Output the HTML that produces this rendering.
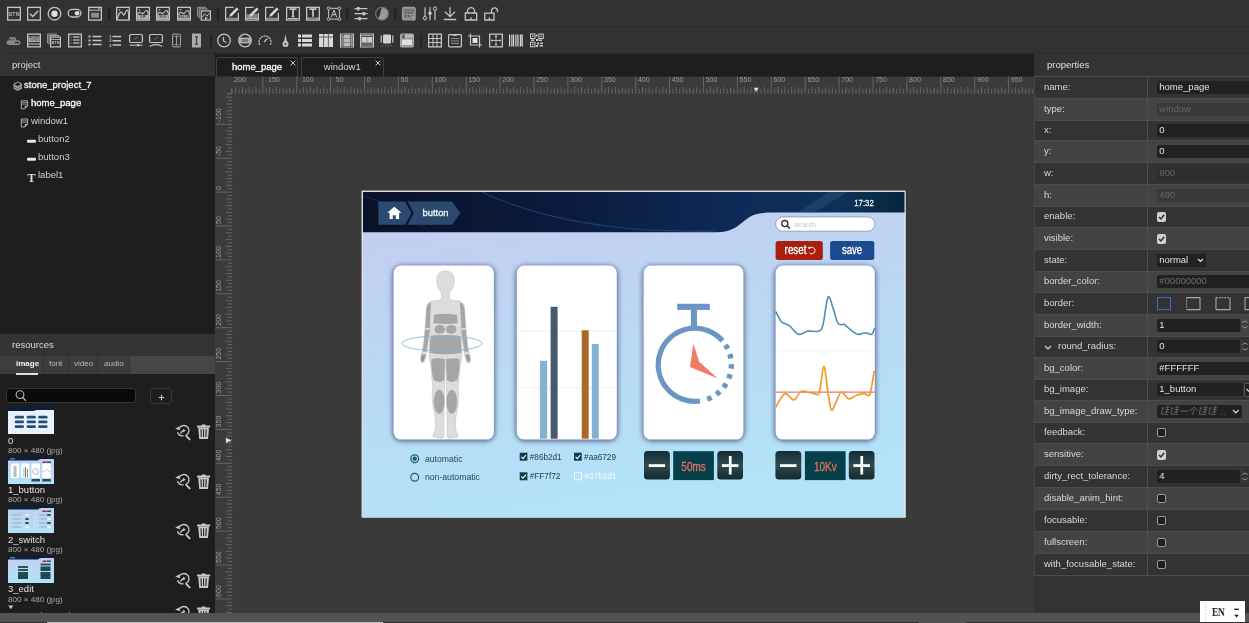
<!DOCTYPE html>
<html><head><meta charset="utf-8">
<style>
*{box-sizing:border-box;margin:0;padding:0}
html,body{width:1249px;height:623px;overflow:hidden;background:#333;font-family:"Liberation Sans",sans-serif;color:#ddd;position:relative}
.a{position:absolute;white-space:nowrap;will-change:transform}
svg{position:absolute;overflow:visible;will-change:transform}
</style></head><body>
<div class="a" style="left:0;top:0;width:1249px;height:54px;background:#323232"></div><div class="a" style="left:6px;top:26px;width:1243px;height:1px;background:#2a2a2a"></div><div class="a" style="left:6px;top:53px;width:1243px;height:1px;background:#2a2a2a"></div><svg style="left:0;top:0" width="1249" height="54" viewBox="0 0 1249 54"><g transform="translate(7,6.7)"><rect x="0.65" y="0.65" width="12.7" height="12.7" fill="none" stroke="#c4c4c4" stroke-width="1.3"/><text x="7" y="9.2" font-size="5.4" font-weight="bold" text-anchor="middle" fill="#b0b0b0" font-family="Liberation Sans">BTN</text></g><g transform="translate(27,6.7)"><rect x="0.65" y="0.65" width="12.7" height="12.7" fill="none" stroke="#c4c4c4" stroke-width="1.3"/><path d="M3 7 L5.8 9.8 L11 4.3" fill="none" stroke="#c4c4c4" stroke-width="1.5"/></g><g transform="translate(47.5,6.7)"><circle cx="7" cy="7" r="6.3" fill="none" stroke="#c4c4c4" stroke-width="1.3"/><circle cx="7" cy="7" r="3.2" fill="#e0e0e0"/></g><g transform="translate(67.5,6.7)"><rect x="0.65" y="2.7" width="12.7" height="7.6" rx="3.8" fill="none" stroke="#c4c4c4" stroke-width="1.3"/><circle cx="9.6" cy="6.5" r="2.3" fill="#e0e0e0"/></g><g transform="translate(88,6.7)"><rect x="0.65" y="0.65" width="12.7" height="12.7" fill="none" stroke="#c4c4c4" stroke-width="1.3"/><path d="M1 3.5 H13" stroke="#c4c4c4" stroke-width="1"/><rect x="10" y="1.5" width="1.6" height="1.2" fill="#c4c4c4"/><rect x="3" y="6" width="8" height="5" fill="#8a8a8a"/></g><rect x="108.5" y="7" width="1.6" height="13" fill="#1f1f1f"/><g transform="translate(116,6.7)"><rect x="0.65" y="0.65" width="12.7" height="12.7" fill="none" stroke="#c4c4c4" stroke-width="1.3"/><path d="M1.3 12.5 C2.5 8 4 4.5 5.5 5.5 C6.5 6.2 7 9 8.2 8 C9.3 6.8 10 3 11.3 3.3 C12.5 3.6 12.7 8 12.7 12.5" fill="none" stroke="#c4c4c4" stroke-width="1.2"/><circle cx="3.5" cy="3.3" r="0.8" fill="#c4c4c4"/></g><g transform="translate(136,6.7)"><rect x="0.65" y="0.65" width="12.7" height="12.7" fill="none" stroke="#c4c4c4" stroke-width="1.3"/><rect x="1.3" y="8.2" width="11.4" height="4.5" fill="#b4b4b4"/><path d="M1.5 8 C2.5 6 3.5 5 5 6 C6 6.8 6.5 7.5 7.5 6.5 C8.5 5 9.5 3.5 10.5 3.8 C11.5 4.2 12.3 6 12.5 8" fill="none" stroke="#c4c4c4" stroke-width="1.1"/><circle cx="3.5" cy="3" r="0.8" fill="#c4c4c4"/><text x="7" y="11.8" font-size="3.6" font-weight="bold" text-anchor="middle" fill="#444" font-family="Liberation Sans">GIF</text></g><g transform="translate(156,6.7)"><rect x="0.65" y="0.65" width="12.7" height="12.7" fill="none" stroke="#c4c4c4" stroke-width="1.3"/><rect x="1.3" y="8.2" width="11.4" height="4.5" fill="#b4b4b4"/><path d="M1.5 8 C2.5 6 3.5 5 5 6 C6 6.8 6.5 7.5 7.5 6.5 C8.5 5 9.5 3.5 10.5 3.8 C11.5 4.2 12.3 6 12.5 8" fill="none" stroke="#c4c4c4" stroke-width="1.1"/><circle cx="3.5" cy="3" r="0.8" fill="#c4c4c4"/><text x="7" y="11.8" font-size="3.6" font-weight="bold" text-anchor="middle" fill="#444" font-family="Liberation Sans">SVG</text></g><g transform="translate(177,6.7)"><rect x="0.65" y="0.65" width="12.7" height="12.7" fill="none" stroke="#c4c4c4" stroke-width="1.3"/><rect x="1.3" y="8.2" width="11.4" height="4.5" fill="#b4b4b4"/><path d="M1.5 8 C2.5 6 3.5 5 5 6 C6 6.8 6.5 7.5 7.5 6.5 C8.5 5 9.5 3.5 10.5 3.8 C11.5 4.2 12.3 6 12.5 8" fill="none" stroke="#c4c4c4" stroke-width="1.1"/><circle cx="3.5" cy="3" r="0.8" fill="#c4c4c4"/><text x="7" y="11.8" font-size="3.6" font-weight="bold" text-anchor="middle" fill="#444" font-family="Liberation Sans">VALUE</text></g><g transform="translate(197,6.7)"><path d="M0.6 10 V0.6 H9" fill="none" stroke="#9a9a9a" stroke-width="1"/><path d="M2.2 11.5 V2.2 H10.5" fill="none" stroke="#a8a8a8" stroke-width="1"/><rect x="4.2" y="4.2" width="9.2" height="9.2" fill="none" stroke="#c4c4c4" stroke-width="1.2"/><path d="M5 11 L7.5 7 L10 9.5 L12.5 6" fill="none" stroke="#c4c4c4" stroke-width="0.9"/><path d="M8 10 L11 11.5 L8 13Z" fill="#c4c4c4"/></g><rect x="217" y="7" width="1.6" height="13" fill="#1f1f1f"/><g transform="translate(225,6.7)"><path d="M8.5 0.65 H0.65 V13.35 H13.35 V6" fill="none" stroke="#c4c4c4" stroke-width="1.3"/><path d="M4.2 10.2 L6.89 9.35 L13.6 2.64 L11.76 0.8 L5.05 7.51Z" fill="#d6d6d6"/><path d="M1.5 11.6 H12.5" stroke="#c4c4c4" stroke-width="0.9"/></g><g transform="translate(245,6.7)"><path d="M8.5 0.65 H0.65 V13.35 H13.35 V6" fill="none" stroke="#c4c4c4" stroke-width="1.3"/><rect x="1.5" y="7.3" width="11" height="5.2" fill="#8a8a8a"/><path d="M1.5 8.6 H12.5 M1.5 10 H12.5 M1.5 11.4 H12.5" stroke="#777" stroke-width="0.5"/><path d="M4.2 10.2 L6.89 9.35 L13.6 2.64 L11.76 0.8 L5.05 7.51Z" fill="#d6d6d6"/><path d="M1.5 11.6 H12.5" stroke="#c4c4c4" stroke-width="0.9"/></g><g transform="translate(265,6.7)"><path d="M8.5 0.65 H0.65 V13.35 H13.35 V6" fill="none" stroke="#c4c4c4" stroke-width="1.3"/><path d="M4.2 10.2 L6.89 9.35 L13.6 2.64 L11.76 0.8 L5.05 7.51Z" fill="#d6d6d6"/><path d="M1.5 11.6 H12.5" stroke="#c4c4c4" stroke-width="0.9"/></g><g transform="translate(286,6.7)"><rect x="0.65" y="0.65" width="12.7" height="12.7" fill="none" stroke="#c4c4c4" stroke-width="1.3"/><path d="M3.5 2.5 H10.5 M7 2.5 V10" stroke="#c4c4c4" stroke-width="1.8"/><path d="M5.5 10 H8.5" stroke="#c4c4c4" stroke-width="1.2"/><path d="M2 11.8 H12" stroke="#c4c4c4" stroke-width="1"/></g><g transform="translate(306,6.7)"><rect x="0.65" y="0.65" width="12.7" height="12.7" fill="none" stroke="#c4c4c4" stroke-width="1.3"/><path d="M3.5 2.5 H10.5 M7 2.5 V10" stroke="#c4c4c4" stroke-width="1.8"/><path d="M2 11.5 H12 M2 10.5 V12.5 M12 10.5 V12.5" stroke="#c4c4c4" stroke-width="0.9"/></g><g transform="translate(327,6.7)"><rect x="1.6" y="1.6" width="10.8" height="10.8" fill="none" stroke="#c4c4c4" stroke-width="1"/><circle cx="1.6" cy="1.6" r="1.4" fill="#333" stroke="#c4c4c4" stroke-width="0.9"/><circle cx="12.4" cy="1.6" r="1.4" fill="#333" stroke="#c4c4c4" stroke-width="0.9"/><circle cx="1.6" cy="12.4" r="1.4" fill="#333" stroke="#c4c4c4" stroke-width="0.9"/><circle cx="12.4" cy="12.4" r="1.4" fill="#333" stroke="#c4c4c4" stroke-width="0.9"/><path d="M4.3 10.5 L7 3.3 L9.7 10.5 M5.3 8 H8.7" fill="none" stroke="#c4c4c4" stroke-width="1"/></g><rect x="346.5" y="7" width="1.6" height="13" fill="#1f1f1f"/><g transform="translate(354,6.7)"><path d="M0.5 2 H13.5 M0.5 7 H13.5 M0.5 12 H13.5" stroke="#c4c4c4" stroke-width="1.3"/><rect x="3" y="0.3" width="2.6" height="3.4" fill="#c4c4c4"/><rect x="8.5" y="5.3" width="2.6" height="3.4" fill="#c4c4c4"/><rect x="4.2" y="10.3" width="2.6" height="3.4" fill="#c4c4c4"/></g><g transform="translate(375,6.7)"><circle cx="7" cy="7" r="6.4" fill="none" stroke="#777" stroke-width="1.1"/><path d="M7 1 A6 6 0 1 1 3 11.5 C6 9 5 4 7 1Z" fill="#9a9a9a"/></g><rect x="394.5" y="7" width="1.6" height="13" fill="#1f1f1f"/><g transform="translate(402,6.7)"><rect x="0.6" y="0.6" width="12.6" height="12.6" rx="1" fill="#8a8a8a" stroke="#a8a8a8" stroke-width="1"/><path d="M1 3.5 H13" stroke="#555" stroke-width="0.8"/><g fill="#555"><circle cx="3.5" cy="6" r="1"/><circle cx="6.5" cy="6" r="1"/><circle cx="9.5" cy="6" r="1"/><circle cx="3.5" cy="9.3" r="1"/><circle cx="6.5" cy="9.3" r="1"/></g><circle cx="11.3" cy="11.3" r="2.6" fill="#9a9a9a" stroke="#666" stroke-width="0.5"/></g><g transform="translate(423,6.7)"><path d="M2 0.5 V13.5 M7 0.5 V13.5 M12 0.5 V13.5" stroke="#c4c4c4" stroke-width="1.2"/><circle cx="2" cy="11.5" r="1.7" fill="#333" stroke="#c4c4c4" stroke-width="1"/><circle cx="7" cy="6.5" r="1.8" fill="#c4c4c4"/><circle cx="12" cy="1.9" r="1.7" fill="#333" stroke="#c4c4c4" stroke-width="1"/></g><g transform="translate(443,6.7)"><path d="M7 0.5 V10 M2 5 L7 10 L12 5 M0.8 12.8 H13.2" fill="none" stroke="#c4c4c4" stroke-width="1.3"/></g><g transform="translate(464,6.7)"><path d="M3.5 6.5 V4.5 A3.5 3.5 0 0 1 10.5 4.5 V6.5" fill="none" stroke="#c4c4c4" stroke-width="1.3"/><path d="M1.3 6.3 H12.7 V13.3 H1.3Z M7 10.5 V13" fill="none" stroke="#c4c4c4" stroke-width="1.3"/></g><g transform="translate(484,6.7)"><path d="M7.5 6.5 V4.2 A3 3 0 0 1 13.5 4.2 V5.5" fill="none" stroke="#c4c4c4" stroke-width="1.3"/><path d="M0.8 6.5 H10 V13.3 H0.8Z M5.4 10.5 V13" fill="none" stroke="#c4c4c4" stroke-width="1.3"/></g><g transform="translate(6.5,33.5)"><rect x="0.6" y="7.5" width="12.8" height="3.2" rx="1.6" fill="none" stroke="#c4c4c4" stroke-width="1"/><rect x="1.5" y="8.3" width="7" height="1.6" fill="#9a9a9a"/><text x="6" y="6.5" font-size="3.5" font-weight="bold" text-anchor="middle" fill="#c4c4c4" font-family="Liberation Sans">70%</text></g><g transform="translate(27,33.5)"><rect x="0.65" y="0.65" width="12.7" height="12.7" fill="none" stroke="#c4c4c4" stroke-width="1.3"/><rect x="1.5" y="3" width="11" height="5.5" fill="#aaa"/><text x="7" y="7.8" font-size="4.6" font-weight="bold" text-anchor="middle" fill="#555" font-family="Liberation Sans">TAB</text><path d="M1 10.5 H13" stroke="#c4c4c4" stroke-width="1"/></g><g transform="translate(47,33.5)"><path d="M0.6 9.5 V0.6 H10" fill="none" stroke="#aaa" stroke-width="0.9"/><path d="M2 11 V2 H11.5 V3" fill="none" stroke="#b0b0b0" stroke-width="0.9"/><rect x="3.6" y="3.6" width="9.8" height="9.8" fill="none" stroke="#c4c4c4" stroke-width="1.2"/><path d="M4 6 H13" stroke="#c4c4c4" stroke-width="0.8"/><text x="8.5" y="10.8" font-size="3.8" font-weight="bold" text-anchor="middle" fill="#c4c4c4" font-family="Liberation Sans">BTN</text></g><g transform="translate(68,33.5)"><rect x="0.65" y="0.65" width="12.7" height="12.7" fill="none" stroke="#c4c4c4" stroke-width="1.3"/><path d="M5 3.5 H11.5 M5 6.5 H11.5 M5 9.5 H11.5" stroke="#aaa" stroke-width="1.3"/><path d="M2.5 3.5 H3.5 M2.5 6.5 H3.5 M2.5 9.5 H3.5" stroke="#aaa" stroke-width="1"/></g><g transform="translate(88,33.5)"><path d="M0.5 3 H2.5 M0.5 7 H2.5 M0.5 11 H2.5" stroke="#c4c4c4" stroke-width="1.8"/><path d="M4.5 3 H13.5 M4.5 7 H13.5 M4.5 11 H13.5" stroke="#c4c4c4" stroke-width="1.6"/></g><g transform="translate(109,33.5)"><text x="1.3" y="4.5" font-size="4" font-weight="bold" text-anchor="middle" fill="#c4c4c4" font-family="Liberation Sans">1</text><text x="1.3" y="8.8" font-size="4" font-weight="bold" text-anchor="middle" fill="#c4c4c4" font-family="Liberation Sans">2</text><text x="1.3" y="13" font-size="4" font-weight="bold" text-anchor="middle" fill="#c4c4c4" font-family="Liberation Sans">3</text><path d="M3.5 3 H12 M3.5 7.2 H12 M3.5 11.5 H12" stroke="#c4c4c4" stroke-width="1.6"/></g><g transform="translate(129,33.5)"><rect x="0.6" y="1" width="12.8" height="8" rx="1.2" fill="none" stroke="#c4c4c4" stroke-width="1.2"/><path d="M5.5 6 L8.5 3.5" stroke="#888" stroke-width="0.9"/><path d="M0.5 11.7 H13.5" stroke="#aaa" stroke-width="1.3"/><rect x="8" y="10.6" width="2.2" height="2.2" fill="#c4c4c4"/></g><g transform="translate(149,33.5)"><rect x="0.6" y="1" width="12.8" height="8" rx="1.2" fill="none" stroke="#c4c4c4" stroke-width="1.2"/><path d="M5.5 6 L8.5 3.5" stroke="#888" stroke-width="0.9"/><path d="M0.5 13 Q7 9 13.5 13" fill="none" stroke="#aaa" stroke-width="1.3"/></g><g transform="translate(172,33.5)"><rect x="0.6" y="0.6" width="7.8" height="12.8" rx="0.8" fill="none" stroke="#aaa" stroke-width="1"/><path d="M4.5 2.5 V11.5 M3 3.5 L4.5 2 L6 3.5 M3 10.5 L4.5 12 L6 10.5" fill="none" stroke="#aaa" stroke-width="0.9"/><path d="M1.5 3 H7.5 M1.5 11 H7.5" stroke="#888" stroke-width="0.6"/></g><g transform="translate(192,33.5)"><rect x="0" y="0" width="9" height="14" fill="#aaa"/><path d="M4.5 2.5 V11.5 M3 3.3 H6 M3 10.7 H6" stroke="#444" stroke-width="1.3"/></g><rect x="210" y="34" width="1.6" height="13" fill="#1f1f1f"/><g transform="translate(217,33.5)"><circle cx="7" cy="7" r="6.3" fill="none" stroke="#c4c4c4" stroke-width="1.2"/><path d="M6.5 3.5 V7.5 L9.5 9" fill="none" stroke="#c4c4c4" stroke-width="1.2"/></g><g transform="translate(238,33.5)"><circle cx="7" cy="7" r="6.3" fill="none" stroke="#c4c4c4" stroke-width="1.2"/><rect x="1" y="4.5" width="12" height="5" fill="#aaa"/><rect x="4" y="5.5" width="6" height="3" fill="#777"/><path d="M1 4.5 H13 M1 9.5 H13" stroke="#c4c4c4" stroke-width="0.7"/></g><g transform="translate(258,33.5)"><path d="M1.8 11.5 A6 6 0 1 1 12.2 11.5" fill="none" stroke="#c4c4c4" stroke-width="1.2" stroke-dasharray="2.2 0.6"/><path d="M6 8.5 L9.5 5" stroke="#c4c4c4" stroke-width="1.2"/></g><g transform="translate(282,33.5)"><path d="M3.5 0.5 L5 9 H2Z" fill="#c4c4c4"/><circle cx="3.5" cy="10.5" r="3" fill="#c4c4c4"/><circle cx="3.5" cy="10.5" r="1" fill="#333"/></g><g transform="translate(298,33.5)"><rect x="0" y="1" width="3" height="3" fill="#d8d8d8"/><rect x="0" y="5.5" width="3" height="3" fill="#d8d8d8"/><rect x="0" y="10" width="3" height="3" fill="#d8d8d8"/><rect x="4" y="1" width="10" height="3" fill="#d8d8d8"/><rect x="4" y="5.5" width="10" height="3" fill="#d8d8d8"/><rect x="4" y="10" width="10" height="3" fill="#d8d8d8"/></g><g transform="translate(319,33.5)"><rect x="0" y="0.5" width="14" height="13" fill="#d8d8d8"/><path d="M4.6 0 V14 M9.4 0 V14" stroke="#555" stroke-width="0.9"/><path d="M0 3.5 H14" stroke="#555" stroke-width="0.9"/></g><g transform="translate(340,33.5)"><rect x="0.5" y="0.5" width="13" height="13" fill="none" stroke="#c4c4c4" stroke-width="1"/><rect x="1.5" y="1.5" width="11" height="11" fill="#bbb"/><path d="M3 0.5 V13.5 M10.8 0.5 V13.5" stroke="#333" stroke-width="0.8"/><path d="M3 5 H10.8 M3 9 H10.8" stroke="#666" stroke-width="0.6"/></g><g transform="translate(360,33.5)"><rect x="0.5" y="0.5" width="13" height="13" fill="none" stroke="#c4c4c4" stroke-width="1"/><rect x="1.5" y="1.5" width="11" height="11" fill="#ccc"/><path d="M1.5 2.8 H12.5" stroke="#444" stroke-width="1.3"/><path d="M7 3.5 V8.5" stroke="#888" stroke-width="0.8"/><rect x="1.5" y="9" width="11" height="3.5" fill="#666"/></g><g transform="translate(380,33.5)"><rect x="3" y="1" width="8" height="9" rx="1" fill="#d0d0d0"/><rect x="0.5" y="2" width="1.5" height="7" fill="#aaa"/><rect x="12" y="2" width="1.5" height="7" fill="#aaa"/><g fill="#888"><rect x="2.2" y="11.8" width="1" height="1"/><rect x="5.2" y="11.8" width="1" height="1"/><rect x="8.2" y="11.8" width="1" height="1"/><rect x="11.2" y="11.8" width="1" height="1"/></g></g><g transform="translate(400,33.5)"><rect x="0.5" y="0.5" width="13" height="13" rx="1" fill="#9a9a9a" stroke="#aaa" stroke-width="1"/><rect x="2" y="6" width="10" height="5.5" fill="#e0e0e0"/><rect x="2.5" y="1" width="2" height="4" fill="#555"/><rect x="5" y="1" width="7.5" height="3" fill="#bbb"/></g><rect x="420.5" y="34" width="1.6" height="13" fill="#1f1f1f"/><g transform="translate(428,33.5)"><rect x="0.65" y="0.65" width="12.7" height="12.7" fill="none" stroke="#c4c4c4" stroke-width="1.3"/><g fill="#c4c4c4"><circle cx="4" cy="4" r="0.01"/></g><path d="M1 5 H13 M1 9 H13 M5 1 V13 M9 1 V13" stroke="#c4c4c4" stroke-width="1.1"/></g><g transform="translate(448,33.5)"><rect x="0.6" y="1.2" width="12.8" height="12.2" rx="0.8" fill="none" stroke="#c4c4c4" stroke-width="1.2"/><path d="M4.5 1.2 Q7 2.5 9.5 1.2" stroke="#c4c4c4" stroke-width="1.2" fill="none"/><path d="M3 5 H11 M3 7.5 H11 M3 10 H11" stroke="#999" stroke-width="0.9"/></g><g transform="translate(468,33.5)"><path d="M2.5 0 V11.5 H14 M0 2.5 H11.5 V14" fill="none" stroke="#c4c4c4" stroke-width="1.2"/><rect x="4.5" y="4.5" width="5" height="5" fill="#e0e0e0"/></g><g transform="translate(489,33.5)"><rect x="0.65" y="0.65" width="12.7" height="12.7" fill="none" stroke="#c4c4c4" stroke-width="1.3"/><path d="M7 2 V12 M2 7 H12" stroke="#c4c4c4" stroke-width="0.9"/><path d="M7 1.8 L5.5 3.6 H8.5Z M7 12.2 L5.5 10.4 H8.5Z M1.8 7 L3.6 5.5 V8.5Z M12.2 7 L10.4 5.5 V8.5Z" fill="#c4c4c4"/></g><g transform="translate(509,33.5)"><g fill="#d8d8d8"><rect x="0" y="1" width="1.2" height="12"/><rect x="2" y="1" width="0.7" height="12"/><rect x="3.5" y="1" width="1.6" height="12"/><rect x="6" y="1" width="0.7" height="12"/><rect x="7.5" y="1" width="1.2" height="12"/><rect x="9.5" y="1" width="0.7" height="12"/><rect x="11" y="1" width="1.6" height="12"/><rect x="13.2" y="1" width="0.8" height="12"/></g></g><g transform="translate(530,33.5)"><g fill="none" stroke="#c8c8c8" stroke-width="1"><rect x="0.5" y="0.5" width="4.5" height="4.5"/><rect x="8.8" y="0.5" width="4.5" height="4.5"/><rect x="0.5" y="8.8" width="4.5" height="4.5"/></g><g fill="#c8c8c8"><rect x="2" y="2" width="1.5" height="1.5"/><rect x="10.3" y="2" width="1.5" height="1.5"/><rect x="2" y="10.3" width="1.5" height="1.5"/><rect x="6" y="1" width="1.5" height="2"/><rect x="6" y="5.5" width="2.5" height="2"/><rect x="9" y="6" width="3" height="1.5"/><rect x="7" y="9" width="2" height="2"/><rect x="10" y="9" width="3" height="1.5"/><rect x="9.5" y="11.5" width="3.5" height="1.5"/><rect x="1" y="6" width="3" height="1.5"/><rect x="6" y="11.5" width="2" height="2"/></g></g></svg><div class="a" style="left:0;top:54px;width:215px;height:559px;background:#1e1e1e"></div><div class="a" style="left:0;top:54px;width:215px;height:22px;background:#333"></div><div class="a" style="left:12px;top:58.5px;font-size:9.5px;color:#ddd">project</div><div class="a" style="left:24.3px;top:78.8px;font-size:9.5px;line-height:11px;color:#f0f0f0;-webkit-text-stroke:0.3px #f0f0f0;">stone_project_7</div><div class="a" style="left:31px;top:96.8px;font-size:9.5px;line-height:11px;color:#f8f8f8;-webkit-text-stroke:0.3px #f8f8f8;">home_page</div><div class="a" style="left:31px;top:115px;font-size:9.5px;line-height:11px;color:#d0d0d0;">window1</div><div class="a" style="left:38px;top:133px;font-size:9.5px;line-height:11px;color:#d0d0d0;">button2</div><div class="a" style="left:38px;top:151px;font-size:9.5px;line-height:11px;color:#d0d0d0;">button3</div><div class="a" style="left:38px;top:169px;font-size:9.5px;line-height:11px;color:#d0d0d0;">label1</div><svg style="left:0;top:0" width="215" height="200"><g transform="translate(13.5,82)"><path d="M4.2 0 L8.5 2.3 L4.2 4.6 L0 2.3Z" fill="none" stroke="#bbb" stroke-width="0.9"/><path d="M0 2.3 V6.8 L4.2 9.1 L8.5 6.8 V2.3 L4.2 4.6Z" fill="#9a9a9a"/><path d="M0 4.5 L4.2 6.8 L8.5 4.5" fill="none" stroke="#555" stroke-width="0.7"/></g><g transform="translate(20.8,100.3)"><path d="M0.5 8.5 V0.5 H6.8 V5.5 L4 8.5Z" fill="none" stroke="#bbb" stroke-width="0.9"/><path d="M1 2.3 H6.5 M1 3.8 H6.5" stroke="#bbb" stroke-width="0.7"/><path d="M4 8.5 V5.5 H6.8" fill="#bbb"/></g><g transform="translate(20.8,118.5)"><path d="M0.5 8.5 V0.5 H6.8 V5.5 L4 8.5Z" fill="none" stroke="#bbb" stroke-width="0.9"/><path d="M1 2.3 H6.5 M1 3.8 H6.5" stroke="#bbb" stroke-width="0.7"/><path d="M4 8.5 V5.5 H6.8" fill="#bbb"/></g><rect x="27" y="139.7" width="9" height="3" rx="1" fill="#e8e8e8"/><rect x="27" y="157.7" width="9" height="3" rx="1" fill="#e8e8e8"/><text x="31.5" y="182" font-family="Liberation Serif" font-size="12" font-weight="bold" text-anchor="middle" fill="#ddd">T</text></svg><div class="a" style="left:0;top:334px;width:215px;height:22px;background:#333"></div><div class="a" style="left:12px;top:338.5px;font-size:9.5px;color:#ddd">resources</div><div class="a" style="left:0;top:355.6px;width:215px;height:18.2px;background:#464646"></div><div class="a" style="left:0;top:355.6px;width:128.6px;height:18.2px;background:#3d3d3d"></div><div class="a" style="left:43px;top:355.6px;width:1.4px;height:18.2px;background:#313131"></div><div class="a" style="left:67.5px;top:355.6px;width:1.4px;height:18.2px;background:#313131"></div><div class="a" style="left:97.4px;top:355.6px;width:1.4px;height:18.2px;background:#313131"></div><div class="a" style="left:128.6px;top:355.6px;width:1.4px;height:18.2px;background:#313131"></div><div class="a" style="left:16.2px;top:358.7px;font-size:8px;font-weight:bold;color:#f4f4f4">image</div><div class="a" style="left:16px;top:372.5px;width:22.4px;height:1.5px;background:#e0e0e0"></div><div class="a" style="left:49px;top:358.7px;font-size:8px;color:#bbb">font</div><div class="a" style="left:74px;top:358.7px;font-size:8px;color:#bbb">video</div><div class="a" style="left:104px;top:358.7px;font-size:8px;color:#bbb">audio</div><div class="a" style="left:6.3px;top:388.3px;width:130.2px;height:15.2px;background:#0a0a0a;border:1px solid #353535;border-radius:3px"></div><svg style="left:14px;top:389px" width="14" height="14"><circle cx="6" cy="5.6" r="3.9" fill="none" stroke="#bbb" stroke-width="1.1"/><path d="M8.8 8.4 L11.8 11.9" stroke="#bbb" stroke-width="1.3"/></svg><div class="a" style="left:150.3px;top:388.3px;width:22.3px;height:15.5px;background:#1e1e1e;border:1px solid #383838;border-radius:3px"></div><svg style="left:158px;top:393.5px" width="7" height="7"><path d="M3.5 0.8 V6.2 M0.8 3.5 H6.2" stroke="#ccc" stroke-width="1.1"/></svg><svg style="left:7.8px;top:407px" width="46" height="27" viewBox="0 0 46 27"><rect x="0" y="0" width="46" height="27" fill="#e8f2fc"/><path d="M0 0 H46 V3 H29 Q27 3 26 4 H0Z" fill="#0b1d3e"/><rect x="6.7" y="8.8" width="9.3" height="2.8" rx="1.2" fill="#254d7e"/><rect x="6.7" y="13.5" width="9.3" height="2.8" rx="1.2" fill="#254d7e"/><rect x="6.7" y="18.2" width="9.3" height="2.8" rx="1.2" fill="#254d7e"/><rect x="18.6" y="8.8" width="9.3" height="2.8" rx="1.2" fill="#254d7e"/><rect x="18.6" y="13.5" width="9.3" height="2.8" rx="1.2" fill="#254d7e"/><rect x="18.6" y="18.2" width="9.3" height="2.8" rx="1.2" fill="#254d7e"/><rect x="30.2" y="8.8" width="9.3" height="2.8" rx="1.2" fill="#254d7e"/><rect x="30.2" y="13.5" width="9.3" height="2.8" rx="1.2" fill="#254d7e"/><rect x="30.2" y="18.2" width="9.3" height="2.8" rx="1.2" fill="#254d7e"/></svg><div class="a" style="left:8px;top:434.5px;font-size:9.5px;line-height:11px;color:#e0e0e0">0</div><div class="a" style="left:8px;top:446px;font-size:8.1px;line-height:10px;color:#aaa">800 × 480 (jpg)</div><svg style="left:174.4px;top:423.5px" width="17" height="17"><path d="M5.6 3.6 A5.2 5.2 0 1 1 11.9 11.4" fill="none" stroke="#c8c8c8" stroke-width="1.4"/><path d="M1.2 4.8 L5.3 2.2 L6.3 6.2Z" fill="#c8c8c8"/><path d="M3.6 8.2 A5.2 5.2 0 0 0 9.5 11.7" fill="none" stroke="#c8c8c8" stroke-width="1.4"/><path d="M6.6 9.6 Q7.5 6.8 10.2 6.6" fill="none" stroke="#c8c8c8" stroke-width="1.3"/><path d="M9.2 4.8 L11.6 6.6 L9.2 8.4Z" fill="#c8c8c8"/><path d="M12.2 11.8 L15.6 15.4" stroke="#c8c8c8" stroke-width="1.9" stroke-linecap="round"/></svg><svg style="left:196.8px;top:424.0px" width="14" height="15"><path d="M4.3 2 Q4.3 0.3 6.6 0.3 Q8.9 0.3 8.9 2Z" fill="#c8c8c8"/><rect x="0" y="1.6" width="13.2" height="1.8" rx="0.6" fill="#c8c8c8"/><path d="M1.2 3.6 H12 L11 14.9 H2.2Z" fill="#c8c8c8"/><path d="M4 5.3 L4.3 13 M6.6 5.3 V13 M9.2 5.3 L8.9 13" stroke="#1e1e1e" stroke-width="1.05"/></svg><svg style="left:7.8px;top:456.8px" width="46" height="27" viewBox="0 0 46 27"><defs><linearGradient id="tg1" x1="0" y1="0" x2="0" y2="1"><stop offset="0" stop-color="#c4cdf0"/><stop offset="1" stop-color="#b0e4f8"/></linearGradient></defs><rect x="0" y="0" width="46" height="27" fill="url(#tg1)"/><path d="M0 0 H46 V2 H33 Q31 2 30 3.5 H0Z" fill="#0b1d3e"/><rect x="2" y="1" width="5" height="1.5" fill="#5a7aa8"/><rect x="34.5" y="4.5" width="4" height="1.5" fill="#a52a1a"/><rect x="39" y="4.5" width="4" height="1.5" fill="#1d4a8c"/><rect x="2.8" y="6.5" width="8.5" height="14.5" rx="1" fill="#fff"/><rect x="13" y="6.5" width="8.5" height="14.5" rx="1" fill="#fff"/><rect x="23.5" y="6.5" width="8.5" height="14.5" rx="1" fill="#fff"/><rect x="34.3" y="6.5" width="8.5" height="14.5" rx="1" fill="#fff"/><rect x="5.5" y="9" width="3" height="11" fill="#bbb"/><rect x="15.5" y="11" width="0.8" height="9.5" fill="#86b2d1"/><rect x="17" y="10" width="0.8" height="10.5" fill="#456"/><rect x="19" y="12" width="0.8" height="8.5" fill="#aa6729"/><circle cx="27.7" cy="14.5" r="3" fill="none" stroke="#6a93c2" stroke-width="0.6"/><path d="M27.5 13 L28.5 15 L29.5 15.5Z" fill="#f87060"/><path d="M34.5 15 Q37 15 38.5 12 Q40 15 43 15" fill="none" stroke="#e8982e" stroke-width="0.5"/><rect x="23.5" y="22" width="8.5" height="2.5" fill="#2b4a52"/><rect x="34.3" y="22" width="8.5" height="2.5" fill="#2b4a52"/></svg><div class="a" style="left:8px;top:484.1px;font-size:9.5px;line-height:11px;color:#e0e0e0">1_button</div><div class="a" style="left:8px;top:495px;font-size:8.1px;line-height:10px;color:#aaa">800 × 480 (jpg)</div><svg style="left:174.4px;top:473px" width="17" height="17"><path d="M5.6 3.6 A5.2 5.2 0 1 1 11.9 11.4" fill="none" stroke="#c8c8c8" stroke-width="1.4"/><path d="M1.2 4.8 L5.3 2.2 L6.3 6.2Z" fill="#c8c8c8"/><path d="M3.6 8.2 A5.2 5.2 0 0 0 9.5 11.7" fill="none" stroke="#c8c8c8" stroke-width="1.4"/><path d="M6.6 9.6 Q7.5 6.8 10.2 6.6" fill="none" stroke="#c8c8c8" stroke-width="1.3"/><path d="M9.2 4.8 L11.6 6.6 L9.2 8.4Z" fill="#c8c8c8"/><path d="M12.2 11.8 L15.6 15.4" stroke="#c8c8c8" stroke-width="1.9" stroke-linecap="round"/></svg><svg style="left:196.8px;top:473.5px" width="14" height="15"><path d="M4.3 2 Q4.3 0.3 6.6 0.3 Q8.9 0.3 8.9 2Z" fill="#c8c8c8"/><rect x="0" y="1.6" width="13.2" height="1.8" rx="0.6" fill="#c8c8c8"/><path d="M1.2 3.6 H12 L11 14.9 H2.2Z" fill="#c8c8c8"/><path d="M4 5.3 L4.3 13 M6.6 5.3 V13 M9.2 5.3 L8.9 13" stroke="#1e1e1e" stroke-width="1.05"/></svg><svg style="left:7.8px;top:506px" width="46" height="27" viewBox="0 0 46 27"><rect x="0" y="0" width="46" height="27" fill="url(#tg1)"/><path d="M0 0 H46 V2 H33 Q31 2 30 3.5 H0Z" fill="#0b1d3e"/><rect x="34.5" y="4.5" width="4" height="1.5" fill="#a52a1a"/><rect x="39" y="4.5" width="4" height="1.5" fill="#1d4a8c"/><rect x="3" y="7" width="21" height="19" rx="1" fill="none" stroke="#a9c0e0" stroke-width="0.4"/><rect x="4.5" y="8.5" width="9" height="1" fill="#9ab"/><rect x="31" y="8.5" width="9" height="1" fill="#9ab"/><rect x="4.5" y="12.5" width="9" height="1" fill="#9ab"/><rect x="31" y="12.5" width="9" height="1" fill="#9ab"/><rect x="4.5" y="16.5" width="9" height="1" fill="#9ab"/><rect x="31" y="16.5" width="9" height="1" fill="#9ab"/><rect x="4.5" y="20.5" width="9" height="1" fill="#9ab"/><rect x="31" y="20.5" width="9" height="1" fill="#9ab"/><rect x="17" y="8.0" width="4" height="2" rx="1" fill="#f0f0e0"/><rect x="17" y="12.0" width="4" height="2" rx="1" fill="#2f5a5c"/><rect x="17" y="16.0" width="4" height="2" rx="1" fill="#2f5a5c"/><rect x="17" y="20.0" width="4" height="2" rx="1" fill="#f0f0e0"/><rect x="39" y="8.0" width="4" height="2" rx="1" fill="#2f5a5c"/><rect x="39" y="12.0" width="4" height="2" rx="1" fill="#f0f0e0"/><rect x="39" y="16.0" width="4" height="2" rx="1" fill="#2f5a5c"/><rect x="39" y="20.0" width="4" height="2" rx="1" fill="#f0f0e0"/></svg><div class="a" style="left:8px;top:533.5px;font-size:9.5px;line-height:11px;color:#e0e0e0">2_switch</div><div class="a" style="left:8px;top:544.5px;font-size:8.1px;line-height:10px;color:#aaa">800 × 480 (jpg)</div><svg style="left:174.4px;top:522.5px" width="17" height="17"><path d="M5.6 3.6 A5.2 5.2 0 1 1 11.9 11.4" fill="none" stroke="#c8c8c8" stroke-width="1.4"/><path d="M1.2 4.8 L5.3 2.2 L6.3 6.2Z" fill="#c8c8c8"/><path d="M3.6 8.2 A5.2 5.2 0 0 0 9.5 11.7" fill="none" stroke="#c8c8c8" stroke-width="1.4"/><path d="M6.6 9.6 Q7.5 6.8 10.2 6.6" fill="none" stroke="#c8c8c8" stroke-width="1.3"/><path d="M9.2 4.8 L11.6 6.6 L9.2 8.4Z" fill="#c8c8c8"/><path d="M12.2 11.8 L15.6 15.4" stroke="#c8c8c8" stroke-width="1.9" stroke-linecap="round"/></svg><svg style="left:196.8px;top:523.0px" width="14" height="15"><path d="M4.3 2 Q4.3 0.3 6.6 0.3 Q8.9 0.3 8.9 2Z" fill="#c8c8c8"/><rect x="0" y="1.6" width="13.2" height="1.8" rx="0.6" fill="#c8c8c8"/><path d="M1.2 3.6 H12 L11 14.9 H2.2Z" fill="#c8c8c8"/><path d="M4 5.3 L4.3 13 M6.6 5.3 V13 M9.2 5.3 L8.9 13" stroke="#1e1e1e" stroke-width="1.05"/></svg><svg style="left:7.8px;top:555.5px" width="46" height="27" viewBox="0 0 46 27"><rect x="0" y="0" width="46" height="27" fill="url(#tg1)"/><path d="M0 0 H46 V2 H33 Q31 2 30 3.5 H0Z" fill="#0b1d3e"/><rect x="2" y="1" width="5" height="1.5" fill="#5a7aa8"/><rect x="34.5" y="4.5" width="4" height="1.5" fill="#a52a1a"/><rect x="39" y="4.5" width="4" height="1.5" fill="#1d4a8c"/><rect x="10" y="10" width="10" height="2" fill="#2b5558"/><rect x="10" y="13" width="10" height="2" fill="#2b5558"/><rect x="10" y="16" width="10" height="7" fill="#1f4a4e"/><rect x="32.5" y="7.5" width="10" height="2" fill="#2b5558"/><rect x="32.5" y="10.5" width="10" height="4.5" fill="#1f4a4e"/><rect x="32.5" y="16" width="10" height="7" fill="#1f4a4e"/></svg><div class="a" style="left:8px;top:583.1px;font-size:9.5px;line-height:11px;color:#e0e0e0">3_edit</div><div class="a" style="left:8px;top:594.8px;font-size:8.1px;line-height:10px;color:#aaa">800 × 480 (jpg)</div><svg style="left:174.4px;top:572px" width="17" height="17"><path d="M5.6 3.6 A5.2 5.2 0 1 1 11.9 11.4" fill="none" stroke="#c8c8c8" stroke-width="1.4"/><path d="M1.2 4.8 L5.3 2.2 L6.3 6.2Z" fill="#c8c8c8"/><path d="M3.6 8.2 A5.2 5.2 0 0 0 9.5 11.7" fill="none" stroke="#c8c8c8" stroke-width="1.4"/><path d="M6.6 9.6 Q7.5 6.8 10.2 6.6" fill="none" stroke="#c8c8c8" stroke-width="1.3"/><path d="M9.2 4.8 L11.6 6.6 L9.2 8.4Z" fill="#c8c8c8"/><path d="M12.2 11.8 L15.6 15.4" stroke="#c8c8c8" stroke-width="1.9" stroke-linecap="round"/></svg><svg style="left:196.8px;top:572.5px" width="14" height="15"><path d="M4.3 2 Q4.3 0.3 6.6 0.3 Q8.9 0.3 8.9 2Z" fill="#c8c8c8"/><rect x="0" y="1.6" width="13.2" height="1.8" rx="0.6" fill="#c8c8c8"/><path d="M1.2 3.6 H12 L11 14.9 H2.2Z" fill="#c8c8c8"/><path d="M4 5.3 L4.3 13 M6.6 5.3 V13 M9.2 5.3 L8.9 13" stroke="#1e1e1e" stroke-width="1.05"/></svg><svg style="left:8px;top:605px" width="6" height="5"><path d="M0.3 0.5 H5.3 L2.8 4.3Z" fill="#ccc"/></svg><svg style="left:174.4px;top:605px" width="17" height="8"><path d="M5.6 3.6 A5.2 5.2 0 1 1 11.9 11.4" fill="none" stroke="#c8c8c8" stroke-width="1.4"/><path d="M1.2 4.8 L5.3 2.2 L6.3 6.2Z" fill="#c8c8c8"/><path d="M3.6 8.2 A5.2 5.2 0 0 0 9.5 11.7" fill="none" stroke="#c8c8c8" stroke-width="1.4"/><path d="M6.6 9.6 Q7.5 6.8 10.2 6.6" fill="none" stroke="#c8c8c8" stroke-width="1.3"/><path d="M9.2 4.8 L11.6 6.6 L9.2 8.4Z" fill="#c8c8c8"/><path d="M12.2 11.8 L15.6 15.4" stroke="#c8c8c8" stroke-width="1.9" stroke-linecap="round"/></svg><svg style="left:196.8px;top:606px" width="14" height="7"><path d="M4.3 2 Q4.3 0.3 6.6 0.3 Q8.9 0.3 8.9 2Z" fill="#c8c8c8"/><rect x="0" y="1.6" width="13.2" height="1.8" rx="0.6" fill="#c8c8c8"/><path d="M1.2 3.6 H12 L11 14.9 H2.2Z" fill="#c8c8c8"/><path d="M4 5.3 L4.3 13 M6.6 5.3 V13 M9.2 5.3 L8.9 13" stroke="#1e1e1e" stroke-width="1.05"/></svg><div class="a" style="left:40.5px;top:611.6px;width:1.4px;height:1.4px;background:#bbb;border-radius:1px"></div><div class="a" style="left:69px;top:611.6px;width:1.4px;height:1.4px;background:#bbb;border-radius:1px"></div><div class="a" style="left:215px;top:54px;width:819px;height:559px;background:#3a3a3a"></div><div class="a" style="left:215px;top:54px;width:819px;height:22.6px;background:#1e1e1e"></div><div class="a" style="left:215.5px;top:56.7px;width:82px;height:21px;background:#1e1e1e;border:1px solid #3f3f3f;border-bottom:none;border-radius:3px 3px 0 0"></div><div class="a" style="left:300.6px;top:56.7px;width:82.5px;height:21px;background:#1e1e1e;border:1px solid #3f3f3f;border-bottom:none;border-radius:3px 3px 0 0"></div><div class="a" style="left:215.5px;top:60.8px;width:82px;text-align:center;font-size:9.5px;line-height:11px;color:#fafafa;-webkit-text-stroke:0.3px #fafafa">home_page</div><div class="a" style="left:300.6px;top:60.8px;width:82.5px;text-align:center;font-size:9.5px;line-height:11px;color:#d4d4d4">window1</div><svg style="left:289.8px;top:59.6px" width="6" height="6"><path d="M0.6 0.6 L5.4 5.4 M5.4 0.6 L0.6 5.4" stroke="#ddd" stroke-width="0.9"/></svg><svg style="left:375px;top:59.6px" width="6" height="6"><path d="M0.6 0.6 L5.4 5.4 M5.4 0.6 L0.6 5.4" stroke="#ddd" stroke-width="0.9"/></svg><svg style="left:0;top:0" width="1249" height="623"><rect x="215" y="76.6" width="819" height="17.2" fill="#3b3b3b"/><rect x="215" y="76.6" width="17.2" height="536.4" fill="#3b3b3b"/><path d="M232.29 89V93.8 M235.68 87V93.8 M239.07 89V93.8 M242.46 87V93.8 M245.85 89V93.8 M249.24 87V93.8 M252.63 89V93.8 M256.02 87V93.8 M259.41 89V93.8 M262.80 76.6V93.8 M266.19 89V93.8 M269.58 87V93.8 M272.97 89V93.8 M276.36 87V93.8 M279.75 89V93.8 M283.14 87V93.8 M286.53 89V93.8 M289.92 87V93.8 M293.31 89V93.8 M296.70 76.6V93.8 M300.09 89V93.8 M303.48 87V93.8 M306.87 89V93.8 M310.26 87V93.8 M313.65 89V93.8 M317.04 87V93.8 M320.43 89V93.8 M323.82 87V93.8 M327.21 89V93.8 M330.60 76.6V93.8 M333.99 89V93.8 M337.38 87V93.8 M340.77 89V93.8 M344.16 87V93.8 M347.55 89V93.8 M350.94 87V93.8 M354.33 89V93.8 M357.72 87V93.8 M361.11 89V93.8 M364.50 76.6V93.8 M367.89 89V93.8 M371.28 87V93.8 M374.67 89V93.8 M378.06 87V93.8 M381.45 89V93.8 M384.84 87V93.8 M388.23 89V93.8 M391.62 87V93.8 M395.01 89V93.8 M398.40 76.6V93.8 M401.79 89V93.8 M405.18 87V93.8 M408.57 89V93.8 M411.96 87V93.8 M415.35 89V93.8 M418.74 87V93.8 M422.13 89V93.8 M425.52 87V93.8 M428.91 89V93.8 M432.30 76.6V93.8 M435.69 89V93.8 M439.08 87V93.8 M442.47 89V93.8 M445.86 87V93.8 M449.25 89V93.8 M452.64 87V93.8 M456.03 89V93.8 M459.42 87V93.8 M462.81 89V93.8 M466.20 76.6V93.8 M469.59 89V93.8 M472.98 87V93.8 M476.37 89V93.8 M479.76 87V93.8 M483.15 89V93.8 M486.54 87V93.8 M489.93 89V93.8 M493.32 87V93.8 M496.71 89V93.8 M500.10 76.6V93.8 M503.49 89V93.8 M506.88 87V93.8 M510.27 89V93.8 M513.66 87V93.8 M517.05 89V93.8 M520.44 87V93.8 M523.83 89V93.8 M527.22 87V93.8 M530.61 89V93.8 M534.00 76.6V93.8 M537.39 89V93.8 M540.78 87V93.8 M544.17 89V93.8 M547.56 87V93.8 M550.95 89V93.8 M554.34 87V93.8 M557.73 89V93.8 M561.12 87V93.8 M564.51 89V93.8 M567.90 76.6V93.8 M571.29 89V93.8 M574.68 87V93.8 M578.07 89V93.8 M581.46 87V93.8 M584.85 89V93.8 M588.24 87V93.8 M591.63 89V93.8 M595.02 87V93.8 M598.41 89V93.8 M601.80 76.6V93.8 M605.19 89V93.8 M608.58 87V93.8 M611.97 89V93.8 M615.36 87V93.8 M618.75 89V93.8 M622.14 87V93.8 M625.53 89V93.8 M628.92 87V93.8 M632.31 89V93.8 M635.70 76.6V93.8 M639.09 89V93.8 M642.48 87V93.8 M645.87 89V93.8 M649.26 87V93.8 M652.65 89V93.8 M656.04 87V93.8 M659.43 89V93.8 M662.82 87V93.8 M666.21 89V93.8 M669.60 76.6V93.8 M672.99 89V93.8 M676.38 87V93.8 M679.77 89V93.8 M683.16 87V93.8 M686.55 89V93.8 M689.94 87V93.8 M693.33 89V93.8 M696.72 87V93.8 M700.11 89V93.8 M703.50 76.6V93.8 M706.89 89V93.8 M710.28 87V93.8 M713.67 89V93.8 M717.06 87V93.8 M720.45 89V93.8 M723.84 87V93.8 M727.23 89V93.8 M730.62 87V93.8 M734.01 89V93.8 M737.40 76.6V93.8 M740.79 89V93.8 M744.18 87V93.8 M747.57 89V93.8 M750.96 87V93.8 M754.35 89V93.8 M757.74 87V93.8 M761.13 89V93.8 M764.52 87V93.8 M767.91 89V93.8 M771.30 76.6V93.8 M774.69 89V93.8 M778.08 87V93.8 M781.47 89V93.8 M784.86 87V93.8 M788.25 89V93.8 M791.64 87V93.8 M795.03 89V93.8 M798.42 87V93.8 M801.81 89V93.8 M805.20 76.6V93.8 M808.59 89V93.8 M811.98 87V93.8 M815.37 89V93.8 M818.76 87V93.8 M822.15 89V93.8 M825.54 87V93.8 M828.93 89V93.8 M832.32 87V93.8 M835.71 89V93.8 M839.10 76.6V93.8 M842.49 89V93.8 M845.88 87V93.8 M849.27 89V93.8 M852.66 87V93.8 M856.05 89V93.8 M859.44 87V93.8 M862.83 89V93.8 M866.22 87V93.8 M869.61 89V93.8 M873.00 76.6V93.8 M876.39 89V93.8 M879.78 87V93.8 M883.17 89V93.8 M886.56 87V93.8 M889.95 89V93.8 M893.34 87V93.8 M896.73 89V93.8 M900.12 87V93.8 M903.51 89V93.8 M906.90 76.6V93.8 M910.29 89V93.8 M913.68 87V93.8 M917.07 89V93.8 M920.46 87V93.8 M923.85 89V93.8 M927.24 87V93.8 M930.63 89V93.8 M934.02 87V93.8 M937.41 89V93.8 M940.80 76.6V93.8 M944.19 89V93.8 M947.58 87V93.8 M950.97 89V93.8 M954.36 87V93.8 M957.75 89V93.8 M961.14 87V93.8 M964.53 89V93.8 M967.92 87V93.8 M971.31 89V93.8 M974.70 76.6V93.8 M978.09 89V93.8 M981.48 87V93.8 M984.87 89V93.8 M988.26 87V93.8 M991.65 89V93.8 M995.04 87V93.8 M998.43 89V93.8 M1001.82 87V93.8 M1005.21 89V93.8 M1008.60 76.6V93.8 M1011.99 89V93.8 M1015.38 87V93.8 M1018.77 89V93.8 M1022.16 87V93.8 M1025.55 89V93.8 M1028.94 87V93.8 M1032.33 89V93.8 M225.8 97.18H232.2 M227.8 100.57H232.2 M225.8 103.96H232.2 M227.8 107.35H232.2 M225.8 110.74H232.2 M227.8 114.13H232.2 M225.8 117.52H232.2 M227.8 120.91H232.2 M215.8 124.30H232.2 M227.8 127.69H232.2 M225.8 131.08H232.2 M227.8 134.47H232.2 M225.8 137.86H232.2 M227.8 141.25H232.2 M225.8 144.64H232.2 M227.8 148.03H232.2 M225.8 151.42H232.2 M227.8 154.81H232.2 M215.8 158.20H232.2 M227.8 161.59H232.2 M225.8 164.98H232.2 M227.8 168.37H232.2 M225.8 171.76H232.2 M227.8 175.15H232.2 M225.8 178.54H232.2 M227.8 181.93H232.2 M225.8 185.32H232.2 M227.8 188.71H232.2 M215.8 192.10H232.2 M227.8 195.49H232.2 M225.8 198.88H232.2 M227.8 202.27H232.2 M225.8 205.66H232.2 M227.8 209.05H232.2 M225.8 212.44H232.2 M227.8 215.83H232.2 M225.8 219.22H232.2 M227.8 222.61H232.2 M215.8 226.00H232.2 M227.8 229.39H232.2 M225.8 232.78H232.2 M227.8 236.17H232.2 M225.8 239.56H232.2 M227.8 242.95H232.2 M225.8 246.34H232.2 M227.8 249.73H232.2 M225.8 253.12H232.2 M227.8 256.51H232.2 M215.8 259.90H232.2 M227.8 263.29H232.2 M225.8 266.68H232.2 M227.8 270.07H232.2 M225.8 273.46H232.2 M227.8 276.85H232.2 M225.8 280.24H232.2 M227.8 283.63H232.2 M225.8 287.02H232.2 M227.8 290.41H232.2 M215.8 293.80H232.2 M227.8 297.19H232.2 M225.8 300.58H232.2 M227.8 303.97H232.2 M225.8 307.36H232.2 M227.8 310.75H232.2 M225.8 314.14H232.2 M227.8 317.53H232.2 M225.8 320.92H232.2 M227.8 324.31H232.2 M215.8 327.70H232.2 M227.8 331.09H232.2 M225.8 334.48H232.2 M227.8 337.87H232.2 M225.8 341.26H232.2 M227.8 344.65H232.2 M225.8 348.04H232.2 M227.8 351.43H232.2 M225.8 354.82H232.2 M227.8 358.21H232.2 M215.8 361.60H232.2 M227.8 364.99H232.2 M225.8 368.38H232.2 M227.8 371.77H232.2 M225.8 375.16H232.2 M227.8 378.55H232.2 M225.8 381.94H232.2 M227.8 385.33H232.2 M225.8 388.72H232.2 M227.8 392.11H232.2 M215.8 395.50H232.2 M227.8 398.89H232.2 M225.8 402.28H232.2 M227.8 405.67H232.2 M225.8 409.06H232.2 M227.8 412.45H232.2 M225.8 415.84H232.2 M227.8 419.23H232.2 M225.8 422.62H232.2 M227.8 426.01H232.2 M215.8 429.40H232.2 M227.8 432.79H232.2 M225.8 436.18H232.2 M227.8 439.57H232.2 M225.8 442.96H232.2 M227.8 446.35H232.2 M225.8 449.74H232.2 M227.8 453.13H232.2 M225.8 456.52H232.2 M227.8 459.91H232.2 M215.8 463.30H232.2 M227.8 466.69H232.2 M225.8 470.08H232.2 M227.8 473.47H232.2 M225.8 476.86H232.2 M227.8 480.25H232.2 M225.8 483.64H232.2 M227.8 487.03H232.2 M225.8 490.42H232.2 M227.8 493.81H232.2 M215.8 497.20H232.2 M227.8 500.59H232.2 M225.8 503.98H232.2 M227.8 507.37H232.2 M225.8 510.76H232.2 M227.8 514.15H232.2 M225.8 517.54H232.2 M227.8 520.93H232.2 M225.8 524.32H232.2 M227.8 527.71H232.2 M215.8 531.10H232.2 M227.8 534.49H232.2 M225.8 537.88H232.2 M227.8 541.27H232.2 M225.8 544.66H232.2 M227.8 548.05H232.2 M225.8 551.44H232.2 M227.8 554.83H232.2 M225.8 558.22H232.2 M227.8 561.61H232.2 M215.8 565.00H232.2 M227.8 568.39H232.2 M225.8 571.78H232.2 M227.8 575.17H232.2 M225.8 578.56H232.2 M227.8 581.95H232.2 M225.8 585.34H232.2 M227.8 588.73H232.2 M225.8 592.12H232.2 M227.8 595.51H232.2 M215.8 598.90H232.2 M227.8 602.29H232.2 M225.8 605.68H232.2 M227.8 609.07H232.2 M225.8 612.46H232.2" stroke="#6a6a6a" stroke-width="0.9" fill="none"/><rect x="231.40" y="80.3" width="1.2" height="0.7" fill="#555"/><text x="234.10" y="82.3" font-size="7" fill="#9a9a9a" font-family="Liberation Sans">200</text><rect x="265.30" y="80.3" width="1.2" height="0.7" fill="#555"/><text x="268.00" y="82.3" font-size="7" fill="#9a9a9a" font-family="Liberation Sans">150</text><rect x="299.20" y="80.3" width="1.2" height="0.7" fill="#555"/><text x="301.90" y="82.3" font-size="7" fill="#9a9a9a" font-family="Liberation Sans">100</text><rect x="333.10" y="80.3" width="1.2" height="0.7" fill="#555"/><text x="335.80" y="82.3" font-size="7" fill="#9a9a9a" font-family="Liberation Sans">50</text><text x="366.70" y="82.3" font-size="7" fill="#9a9a9a" font-family="Liberation Sans">0</text><text x="400.60" y="82.3" font-size="7" fill="#9a9a9a" font-family="Liberation Sans">50</text><text x="434.50" y="82.3" font-size="7" fill="#9a9a9a" font-family="Liberation Sans">100</text><text x="468.40" y="82.3" font-size="7" fill="#9a9a9a" font-family="Liberation Sans">150</text><text x="502.30" y="82.3" font-size="7" fill="#9a9a9a" font-family="Liberation Sans">200</text><text x="536.20" y="82.3" font-size="7" fill="#9a9a9a" font-family="Liberation Sans">250</text><text x="570.10" y="82.3" font-size="7" fill="#9a9a9a" font-family="Liberation Sans">300</text><text x="604.00" y="82.3" font-size="7" fill="#9a9a9a" font-family="Liberation Sans">350</text><text x="637.90" y="82.3" font-size="7" fill="#9a9a9a" font-family="Liberation Sans">400</text><text x="671.80" y="82.3" font-size="7" fill="#9a9a9a" font-family="Liberation Sans">450</text><text x="705.70" y="82.3" font-size="7" fill="#9a9a9a" font-family="Liberation Sans">500</text><text x="739.60" y="82.3" font-size="7" fill="#9a9a9a" font-family="Liberation Sans">550</text><text x="773.50" y="82.3" font-size="7" fill="#9a9a9a" font-family="Liberation Sans">600</text><text x="807.40" y="82.3" font-size="7" fill="#9a9a9a" font-family="Liberation Sans">650</text><text x="841.30" y="82.3" font-size="7" fill="#9a9a9a" font-family="Liberation Sans">700</text><text x="875.20" y="82.3" font-size="7" fill="#9a9a9a" font-family="Liberation Sans">750</text><text x="909.10" y="82.3" font-size="7" fill="#9a9a9a" font-family="Liberation Sans">800</text><text x="943.00" y="82.3" font-size="7" fill="#9a9a9a" font-family="Liberation Sans">850</text><text x="976.90" y="82.3" font-size="7" fill="#9a9a9a" font-family="Liberation Sans">900</text><text x="1010.80" y="82.3" font-size="7" fill="#9a9a9a" font-family="Liberation Sans">950</text><text transform="translate(221.2,122.30) rotate(-90)" x="0" y="0" font-size="7" fill="#9a9a9a" font-family="Liberation Sans">-100</text><text transform="translate(221.2,156.20) rotate(-90)" x="0" y="0" font-size="7" fill="#9a9a9a" font-family="Liberation Sans">-50</text><text transform="translate(221.2,190.10) rotate(-90)" x="0" y="0" font-size="7" fill="#9a9a9a" font-family="Liberation Sans">0</text><text transform="translate(221.2,224.00) rotate(-90)" x="0" y="0" font-size="7" fill="#9a9a9a" font-family="Liberation Sans">50</text><text transform="translate(221.2,257.90) rotate(-90)" x="0" y="0" font-size="7" fill="#9a9a9a" font-family="Liberation Sans">100</text><text transform="translate(221.2,291.80) rotate(-90)" x="0" y="0" font-size="7" fill="#9a9a9a" font-family="Liberation Sans">150</text><text transform="translate(221.2,325.70) rotate(-90)" x="0" y="0" font-size="7" fill="#9a9a9a" font-family="Liberation Sans">200</text><text transform="translate(221.2,359.60) rotate(-90)" x="0" y="0" font-size="7" fill="#9a9a9a" font-family="Liberation Sans">250</text><text transform="translate(221.2,393.50) rotate(-90)" x="0" y="0" font-size="7" fill="#9a9a9a" font-family="Liberation Sans">300</text><text transform="translate(221.2,427.40) rotate(-90)" x="0" y="0" font-size="7" fill="#9a9a9a" font-family="Liberation Sans">350</text><text transform="translate(221.2,461.30) rotate(-90)" x="0" y="0" font-size="7" fill="#9a9a9a" font-family="Liberation Sans">400</text><text transform="translate(221.2,495.20) rotate(-90)" x="0" y="0" font-size="7" fill="#9a9a9a" font-family="Liberation Sans">450</text><text transform="translate(221.2,529.10) rotate(-90)" x="0" y="0" font-size="7" fill="#9a9a9a" font-family="Liberation Sans">500</text><text transform="translate(221.2,563.00) rotate(-90)" x="0" y="0" font-size="7" fill="#9a9a9a" font-family="Liberation Sans">550</text><text transform="translate(221.2,596.90) rotate(-90)" x="0" y="0" font-size="7" fill="#9a9a9a" font-family="Liberation Sans">600</text><text transform="translate(221.2,630.80) rotate(-90)" x="0" y="0" font-size="7" fill="#9a9a9a" font-family="Liberation Sans">650</text><rect x="215" y="76.6" width="17.2" height="17.2" fill="#3b3b3b"/><path d="M227 93.6 H231.6 V88.5" fill="none" stroke="#777" stroke-width="0.8"/><path d="M753.8 87.7 H758.6 L756.2 92.1Z" fill="#ddd"/><path d="M225.9 437.7 V443.1 L231.6 440.4Z" fill="#ddd"/></svg><svg style="left:0;top:0" width="1249" height="623" viewBox="0 0 1249 623"><defs>
<linearGradient id="body" x1="0" y1="0" x2="0.25" y2="1"><stop offset="0" stop-color="#c6cbf0"/><stop offset="0.45" stop-color="#bcd6f4"/><stop offset="1" stop-color="#b2e3f8"/></linearGradient>
<linearGradient id="hdr" x1="0" y1="0" x2="1" y2="0"><stop offset="0" stop-color="#0a1228"/><stop offset="0.35" stop-color="#0b1a3c"/><stop offset="0.7" stop-color="#0e2a58"/><stop offset="0.88" stop-color="#0d3256"/><stop offset="1" stop-color="#05273c"/></linearGradient>
<linearGradient id="spin" x1="0" y1="0" x2="0" y2="1"><stop offset="0" stop-color="#132d36"/><stop offset="0.5" stop-color="#304a4e"/><stop offset="1" stop-color="#12282e"/></linearGradient>
<filter id="shd" x="-20%" y="-20%" width="140%" height="140%"><feGaussianBlur stdDeviation="2.4"/></filter>
</defs><rect x="361.5" y="190.5" width="544" height="327" fill="#c8c8c8"/><rect x="362.5" y="191.5" width="543" height="326" fill="#f4f8fc"/><rect x="363" y="192" width="541.5" height="325" fill="url(#body)"/><path d="M363 192 H904.5 V212.6 H768 C752 212.6 748 218 740 224.2 C732 230.5 726 232.3 712 232.3 H363Z" fill="url(#hdr)"/><path d="M363 196 Q400 205 430 232" fill="none" stroke="#1c3252" stroke-width="0.9" opacity="0.8"/><path d="M482 192 Q545 222 640 229.5 Q690 231.5 714 231" fill="none" stroke="#2a5a98" stroke-width="1.2" opacity="0.55"/><path d="M798 212.5 L828 192 L848 192 L814 212.5Z" fill="#4a7aa0" opacity="0.22"/><path d="M378.3 201.4 H405 L411.5 213 L405 224.7 H378.3Z" fill="#2c4a70"/><path d="M407.5 201.4 H452 L460.4 213 L452 224.7 H407.5 L414 213Z" fill="#2c4a70"/><path d="M394.3 206.7 L387.3 212.8 H389.6 V218.9 H392.8 V215.2 H395.8 V218.9 H399.1 V212.8 H401.4Z" fill="#fff"/><text x="422.5" y="216" font-size="9.4" fill="#f0f4f8" stroke="#f0f4f8" stroke-width="0.3" font-family="Liberation Sans">button</text><text transform="translate(854.3,206.4) scale(0.82,1)" font-size="9.5" fill="#f4f6f8" stroke="#f4f6f8" stroke-width="0.25" font-family="Liberation Sans">17:32</text><rect x="775.6" y="216.9" width="99.4" height="14.3" rx="7.15" fill="#fff" stroke="#8f9cb8" stroke-width="0.9"/><circle cx="784.8" cy="223.6" r="3.1" fill="none" stroke="#333" stroke-width="1.3"/><path d="M787 225.8 L789.8 228.6" stroke="#333" stroke-width="1.5"/><text x="794.2" y="226.5" font-size="7.3" fill="#c8c8c8" font-family="Liberation Sans">search</text><rect x="775.6" y="241.1" width="47.2" height="18.9" rx="2.5" fill="#a81f10"/><text transform="translate(784.6,254.3) scale(0.79,1)" font-size="12.5" fill="#fff" stroke="#fff" stroke-width="0.35" font-family="Liberation Sans">reset</text><path d="M810.2 247.6 A3.3 3.3 0 1 1 809.6 253" fill="none" stroke="#fff" stroke-width="0.9"/><path d="M808.6 246.2 L811.2 247.9 L808.4 249.2Z" fill="#fff"/><rect x="830.1" y="241.1" width="44.2" height="18.9" rx="2.5" fill="#1b4a8e"/><text transform="translate(841.9,254.3) scale(0.77,1)" font-size="12.5" fill="#fff" stroke="#fff" stroke-width="0.35" font-family="Liberation Sans">save</text><rect x="392.40000000000003" y="265.4" width="102.69999999999996" height="176" rx="9" fill="#4c5584" opacity="0.85" filter="url(#shd)"/><rect x="515.5999999999999" y="265.4" width="102.4" height="176" rx="9" fill="#4c5584" opacity="0.85" filter="url(#shd)"/><rect x="642.4" y="265.4" width="102.19999999999996" height="176" rx="9" fill="#4c5584" opacity="0.85" filter="url(#shd)"/><rect x="774.4" y="265.4" width="101.59999999999994" height="176" rx="9" fill="#4c5584" opacity="0.85" filter="url(#shd)"/><rect x="393.6" y="265.6" width="100.29999999999995" height="174" rx="7.5" fill="#fff"/><rect x="516.8" y="265.6" width="100.0" height="174" rx="7.5" fill="#fff"/><rect x="643.6" y="265.6" width="99.79999999999995" height="174" rx="7.5" fill="#fff"/><rect x="775.6" y="265.6" width="99.19999999999993" height="174" rx="7.5" fill="#fff"/><path d="M445.50 271.00 C446.03 271.07 447.63 271.03 448.70 271.40 C449.77 271.77 451.05 272.33 451.90 273.20 C452.75 274.07 453.40 275.37 453.80 276.60 C454.20 277.83 454.30 279.18 454.30 280.60 C454.30 282.02 454.17 283.68 453.80 285.10 C453.43 286.52 452.72 287.93 452.10 289.10 C451.48 290.27 450.52 291.02 450.10 292.10 C449.68 293.18 449.70 294.52 449.60 295.60 C449.50 296.68 448.85 297.77 449.50 298.60 C450.15 299.43 451.83 300.18 453.50 300.60 C455.17 301.02 458.08 300.68 459.50 301.10 C460.92 301.52 461.25 302.52 462.00 303.10 C462.75 303.68 463.58 303.85 464.00 304.60 C464.42 305.35 464.38 306.43 464.50 307.60 C464.62 308.77 464.53 309.43 464.70 311.60 C464.87 313.77 465.28 317.93 465.50 320.60 C465.72 323.27 465.83 325.10 466.00 327.60 C466.17 330.10 466.25 332.93 466.50 335.60 C466.75 338.27 467.17 341.10 467.50 343.60 C467.83 346.10 468.17 348.93 468.50 350.60 C468.83 352.27 469.17 352.27 469.50 353.60 C469.83 354.93 470.42 357.18 470.50 358.60 C470.58 360.02 470.42 361.35 470.00 362.10 C469.58 362.85 468.55 363.18 468.00 363.10 C467.45 363.02 467.20 362.68 466.70 361.60 C466.20 360.52 465.37 358.10 465.00 356.60 C464.63 355.10 464.75 354.10 464.50 352.60 C464.25 351.10 463.83 349.77 463.50 347.60 C463.17 345.43 462.83 342.27 462.50 339.60 C462.17 336.93 461.73 333.93 461.50 331.60 C461.27 329.27 461.18 325.60 461.10 325.60 C461.02 325.60 460.93 329.27 461.00 331.60 C461.07 333.93 461.37 337.27 461.50 339.60 C461.63 341.93 461.70 343.60 461.80 345.60 C461.90 347.60 462.12 349.60 462.10 351.60 C462.08 353.60 461.97 355.60 461.70 357.60 C461.43 359.60 460.87 361.27 460.50 363.60 C460.13 365.93 459.75 368.93 459.50 371.60 C459.25 374.27 459.22 377.27 459.00 379.60 C458.78 381.93 458.25 383.27 458.20 385.60 C458.15 387.93 458.72 390.27 458.70 393.60 C458.68 396.93 458.47 402.27 458.10 405.60 C457.73 408.93 456.90 411.27 456.50 413.60 C456.10 415.93 455.87 417.60 455.70 419.60 C455.53 421.60 455.45 423.77 455.50 425.60 C455.55 427.43 455.67 429.27 456.00 430.60 C456.33 431.93 457.25 432.52 457.50 433.60 C457.75 434.68 458.42 436.38 457.50 437.10 C456.58 437.82 453.70 437.88 452.00 437.90 C450.30 437.92 448.12 439.25 447.30 437.20 C446.48 435.15 447.18 430.87 447.10 425.60 C447.02 420.33 446.92 412.27 446.80 405.60 C446.68 398.93 446.52 390.93 446.40 385.60 C446.28 380.27 446.20 376.93 446.10 373.60 C446.00 370.27 445.90 367.60 445.80 365.60 C445.70 363.60 445.60 361.60 445.50 361.60 C445.40 361.60 445.30 363.60 445.20 365.60 C445.10 367.60 445.00 370.27 444.90 373.60 C444.80 376.93 444.72 380.27 444.60 385.60 C444.48 390.93 444.32 398.93 444.20 405.60 C444.08 412.27 443.98 420.33 443.90 425.60 C443.82 430.87 444.52 435.15 443.70 437.20 C442.88 439.25 440.70 437.92 439.00 437.90 C437.30 437.88 434.42 437.82 433.50 437.10 C432.58 436.38 433.25 434.68 433.50 433.60 C433.75 432.52 434.67 431.93 435.00 430.60 C435.33 429.27 435.45 427.43 435.50 425.60 C435.55 423.77 435.47 421.60 435.30 419.60 C435.13 417.60 434.90 415.93 434.50 413.60 C434.10 411.27 433.27 408.93 432.90 405.60 C432.53 402.27 432.32 396.93 432.30 393.60 C432.28 390.27 432.85 387.93 432.80 385.60 C432.75 383.27 432.22 381.93 432.00 379.60 C431.78 377.27 431.75 374.27 431.50 371.60 C431.25 368.93 430.87 365.93 430.50 363.60 C430.13 361.27 429.57 359.60 429.30 357.60 C429.03 355.60 428.92 353.60 428.90 351.60 C428.88 349.60 429.10 347.60 429.20 345.60 C429.30 343.60 429.37 341.93 429.50 339.60 C429.63 337.27 429.93 333.93 430.00 331.60 C430.07 329.27 429.98 325.60 429.90 325.60 C429.82 325.60 429.73 329.27 429.50 331.60 C429.27 333.93 428.83 336.93 428.50 339.60 C428.17 342.27 427.83 345.43 427.50 347.60 C427.17 349.77 426.75 351.10 426.50 352.60 C426.25 354.10 426.37 355.10 426.00 356.60 C425.63 358.10 424.80 360.52 424.30 361.60 C423.80 362.68 423.55 363.02 423.00 363.10 C422.45 363.18 421.42 362.85 421.00 362.10 C420.58 361.35 420.42 360.02 420.50 358.60 C420.58 357.18 421.17 354.93 421.50 353.60 C421.83 352.27 422.17 352.27 422.50 350.60 C422.83 348.93 423.17 346.10 423.50 343.60 C423.83 341.10 424.25 338.27 424.50 335.60 C424.75 332.93 424.83 330.10 425.00 327.60 C425.17 325.10 425.28 323.27 425.50 320.60 C425.72 317.93 426.13 313.77 426.30 311.60 C426.47 309.43 426.38 308.77 426.50 307.60 C426.62 306.43 426.58 305.35 427.00 304.60 C427.42 303.85 428.25 303.68 429.00 303.10 C429.75 302.52 430.08 301.52 431.50 301.10 C432.92 300.68 435.83 301.02 437.50 300.60 C439.17 300.18 440.85 299.43 441.50 298.60 C442.15 297.77 441.50 296.68 441.40 295.60 C441.30 294.52 441.32 293.18 440.90 292.10 C440.48 291.02 439.52 290.27 438.90 289.10 C438.28 287.93 437.57 286.52 437.20 285.10 C436.83 283.68 436.70 282.02 436.70 280.60 C436.70 279.18 436.80 277.83 437.20 276.60 C437.60 275.37 438.25 274.07 439.10 273.20 C439.95 272.33 441.23 271.77 442.30 271.40 C443.37 271.03 444.97 271.07 445.50 271.00Z" fill="#dcdcdc" stroke="#c2c2c2" stroke-width="0.6"/><path d="M459.80 302.60 C463.00 303.10 464.50 305.60 464.70 311.60 L465.50 328.10 L461.30 328.10 L460.70 315.60 C460.50 309.60 460.00 305.60 459.80 302.60Z" fill="#a6a6a6"/><path d="M461.40 329.80 L465.80 329.80 C466.50 337.60 467.50 345.60 468.50 351.60 L464.70 352.10 C463.50 345.60 462.30 337.60 461.40 329.80Z" fill="#a6a6a6"/><path d="M465.10 354.60 L469.50 354.60 L470.10 361.10 L467.50 362.10 Z" fill="#9a9a9a"/><ellipse cx="451.20" cy="329.40" rx="5.3" ry="4.3" fill="#a6a6a6"/><path d="M446.10 359.10 C451.50 357.80 456.50 358.10 459.50 359.10 C460.00 367.60 459.00 375.60 457.00 380.10 C453.50 382.60 448.50 382.60 446.70 379.60 Z" fill="#a6a6a6"/><ellipse cx="451.80" cy="401.80" rx="5.4" ry="12" fill="#a6a6a6"/><path d="M431.20 302.60 C428.00 303.10 426.50 305.60 426.30 311.60 L425.50 328.10 L429.70 328.10 L430.30 315.60 C430.50 309.60 431.00 305.60 431.20 302.60Z" fill="#a6a6a6"/><path d="M429.60 329.80 L425.20 329.80 C424.50 337.60 423.50 345.60 422.50 351.60 L426.30 352.10 C427.50 345.60 428.70 337.60 429.60 329.80Z" fill="#a6a6a6"/><path d="M425.90 354.60 L421.50 354.60 L420.90 361.10 L423.50 362.10 Z" fill="#9a9a9a"/><ellipse cx="439.80" cy="329.40" rx="5.3" ry="4.3" fill="#a6a6a6"/><path d="M444.90 359.10 C439.50 357.80 434.50 358.10 431.50 359.10 C431.00 367.60 432.00 375.60 434.00 380.10 C437.50 382.60 442.50 382.60 444.30 379.60 Z" fill="#a6a6a6"/><ellipse cx="439.20" cy="401.80" rx="5.4" ry="12" fill="#a6a6a6"/><path d="M434.00 315.10 Q445.50 312.20 457.00 315.10 L457.50 323.30 Q445.50 324.60 433.50 323.30Z" fill="#a6a6a6"/><path d="M430.70 336.10 Q445.50 334.10 460.30 336.10 C461.00 341.60 461.50 347.60 461.30 353.10 Q445.50 355.60 429.70 353.10 C429.50 347.60 430.00 341.60 430.70 336.10Z" fill="#a6a6a6"/><ellipse cx="442" cy="343.4" rx="40" ry="7.6" fill="none" stroke="#8fb2da" stroke-width="0.9"/><path d="M519 331.2 H615 M519 387.7 H615" stroke="#cfcfcf" stroke-width="0.7" stroke-dasharray="1.5 1.2"/><rect x="539.9" y="360.8" width="7.3" height="77.9" fill="#86b2d1"/><rect x="550.6" y="306.8" width="7" height="131.9" fill="#475a6c"/><rect x="581.7" y="330.3" width="7" height="108.4" fill="#aa6729"/><rect x="591.8" y="344" width="7" height="94.7" fill="#86b2d1"/><rect x="677.2" y="303.8" width="32.6" height="6.1" fill="#6a95c4"/><rect x="690.9" y="309" width="6.1" height="17" fill="#6a95c4"/><path d="M722.42 340.79 A36.6 36.6 0 1 0 699.89 401.04" fill="none" stroke="#6a95c4" stroke-width="5.2"/><path d="M707.32 399.19 A36.6 36.6 0 0 0 711.42 397.41 M716.31 394.41 A36.6 36.6 0 0 0 719.76 391.57 M723.64 387.33 A36.6 36.6 0 0 0 726.17 383.65 M728.73 378.51 A36.6 36.6 0 0 0 730.15 374.27 M731.20 368.63 A36.6 36.6 0 0 0 731.39 364.16 M730.84 358.44 A36.6 36.6 0 0 0 729.80 354.10 M727.70 348.76 A36.6 36.6 0 0 0 725.50 344.87 " fill="none" stroke="#6a95c4" stroke-width="5.4"/><path d="M693.4 343.4 L699 361.5 L717.8 378.5 L690 367 Z" fill="#f47a68"/><path d="M777 351 H873" stroke="#d8d8d8" stroke-width="0.7" stroke-dasharray="1.5 1.2"/><path d="M775.60 311.40 C776.62 313.17 779.40 319.62 781.70 322.00 C784.00 324.38 786.60 323.65 789.40 325.70 C792.20 327.75 795.45 333.38 798.50 334.30 C801.55 335.22 804.40 331.72 807.70 331.20 C811.00 330.68 815.77 332.22 818.30 331.20 C820.83 330.18 821.27 330.80 822.90 325.10 C824.53 319.40 826.32 299.53 828.10 297.00 C829.88 294.47 831.92 305.47 833.60 309.90 C835.28 314.33 836.42 321.17 838.20 323.60 C839.98 326.03 842.27 323.48 844.30 324.50 C846.33 325.52 848.12 328.07 850.40 329.70 C852.68 331.33 855.47 333.80 858.00 334.30 C860.53 334.80 863.32 332.70 865.60 332.70 C867.88 332.70 870.17 335.05 871.70 334.30 C873.23 333.55 874.28 329.22 874.80 328.20" fill="none" stroke="#4a90ba" stroke-width="1.6"/><path d="M775.6 392.2 H874.8" stroke="#e87272" stroke-width="1.3"/><path d="M775.60 407.50 C777.13 405.20 781.73 394.97 784.80 393.70 C787.87 392.43 791.20 400.30 794.00 399.90 C796.80 399.50 798.30 392.33 801.60 391.30 C804.90 390.27 810.85 393.55 813.80 393.70 C816.75 393.85 817.63 396.77 819.30 392.20 C820.97 387.63 822.43 366.80 823.80 366.30 C825.17 365.80 826.28 381.98 827.50 389.20 C828.72 396.42 829.83 407.07 831.10 409.60 C832.37 412.13 833.42 407.30 835.10 404.40 C836.78 401.50 838.92 393.12 841.20 392.20 C843.48 391.28 846.25 398.38 848.80 398.90 C851.35 399.42 853.95 396.17 856.50 395.30 C859.05 394.43 861.97 393.70 864.10 393.70 C866.23 393.70 868.03 396.57 869.30 395.30 C870.57 394.03 870.88 390.17 871.70 386.10 C872.52 382.03 873.78 373.43 874.20 370.90" fill="none" stroke="#f29a2a" stroke-width="1.7"/><circle cx="414.7" cy="458.8" r="3.9" fill="none" stroke="#1b6062" stroke-width="1.2"/><circle cx="414.7" cy="458.8" r="2.2" fill="#1b6062"/><circle cx="414.7" cy="477.2" r="3.9" fill="none" stroke="#1b6062" stroke-width="1.2"/><text x="424.9" y="461.8" font-size="8.7" fill="#234c56" font-family="Liberation Sans">automatic</text><text x="424.9" y="480.2" font-size="8.7" fill="#234c56" font-family="Liberation Sans">non-automatic</text><rect x="519.7" y="452.7" width="7.7" height="8" fill="#0f3d48"/><path d="M521.3000000000001 456.9 L523.0 458.59999999999997 L526.0 455.0" fill="none" stroke="#fff" stroke-width="1.1"/><text x="529.8000000000001" y="459.7" font-size="8.2" fill="#1f3a48" font-family="Liberation Sans">#86b2d1</text><rect x="574" y="452.7" width="7.7" height="8" fill="#0f3d48"/><path d="M575.6 456.9 L577.3 458.59999999999997 L580.3 455.0" fill="none" stroke="#fff" stroke-width="1.1"/><text x="584.1" y="459.7" font-size="8.2" fill="#1f3a48" font-family="Liberation Sans">#aa6729</text><rect x="519.7" y="472.3" width="7.7" height="8" fill="#0f3d48"/><path d="M521.3000000000001 476.5 L523.0 478.2 L526.0 474.6" fill="none" stroke="#fff" stroke-width="1.1"/><text x="529.8000000000001" y="479.3" font-size="8.2" fill="#1f3a48" font-family="Liberation Sans">#FF7f72</text><rect x="574.5" y="472.8" width="7" height="7" fill="none" stroke="#f4fbff" stroke-width="0.9"/><text x="584.5" y="479.3" font-size="8.2" fill="#f4fbff" font-family="Liberation Sans">#37b2d1</text><rect x="644" y="451" width="25.9" height="28.5" rx="3.5" fill="url(#spin)"/><rect x="648.7" y="464.2" width="16.4" height="2.8" fill="#fff"/><rect x="673.2" y="451.2" width="40.7" height="28.9" fill="#06404a"/><text transform="translate(693.5500000000001,471.3) scale(0.80,1)" text-anchor="middle" font-size="12.5" fill="#e8705e" stroke="#e8705e" stroke-width="0.3" font-family="Liberation Sans">50ms</text><rect x="717.3" y="451" width="25.7" height="28.5" rx="3.5" fill="url(#spin)"/><rect x="721.9" y="464.2" width="16.5" height="2.8" fill="#fff"/><rect x="728.9" y="456" width="2.7" height="18.5" fill="#fff"/><rect x="775.4" y="451" width="25.9" height="28.5" rx="3.5" fill="url(#spin)"/><rect x="780.1" y="464.2" width="16.4" height="2.8" fill="#fff"/><rect x="804.9" y="451.2" width="40.7" height="28.9" fill="#06404a"/><text transform="translate(825.25,471.3) scale(0.80,1)" text-anchor="middle" font-size="12.5" fill="#e8705e" stroke="#e8705e" stroke-width="0.3" font-family="Liberation Sans">10Kv</text><rect x="848.8" y="451" width="25.7" height="28.5" rx="3.5" fill="url(#spin)"/><rect x="853.4" y="464.2" width="16.5" height="2.8" fill="#fff"/><rect x="860.4" y="456" width="2.7" height="18.5" fill="#fff"/></svg><div class="a" style="left:1034px;top:54px;width:215px;height:559px;background:#333"></div><div class="a" style="left:1034px;top:54px;width:215px;height:22px;background:#333"></div><div class="a" style="left:1046.7px;top:58.5px;font-size:9.5px;color:#e0e0e0">properties</div><div class="a" style="left:1034.3px;top:76.3px;width:215px;height:21.60000000000001px;background:#333333;border-top:1px solid #4c4c4c"></div><div class="a" style="left:1044px;top:81.0px;font-size:9.5px;line-height:11px;color:#d8d8d8">name:</div><div class="a" style="left:1034.3px;top:97.9px;width:215px;height:21.599999999999994px;background:#434343;border-top:1px solid #4c4c4c"></div><div class="a" style="left:1044px;top:102.60000000000001px;font-size:9.5px;line-height:11px;color:#d8d8d8">type:</div><div class="a" style="left:1034.3px;top:119.5px;width:215px;height:20.900000000000006px;background:#333333;border-top:1px solid #4c4c4c"></div><div class="a" style="left:1044px;top:123.85px;font-size:9.5px;line-height:11px;color:#d8d8d8">x:</div><div class="a" style="left:1034.3px;top:140.4px;width:215px;height:21.799999999999983px;background:#434343;border-top:1px solid #4c4c4c"></div><div class="a" style="left:1044px;top:145.20000000000002px;font-size:9.5px;line-height:11px;color:#d8d8d8">y:</div><div class="a" style="left:1034.3px;top:162.2px;width:215px;height:21.400000000000006px;background:#333333;border-top:1px solid #4c4c4c"></div><div class="a" style="left:1044px;top:166.79999999999998px;font-size:9.5px;line-height:11px;color:#d8d8d8">w:</div><div class="a" style="left:1034.3px;top:183.6px;width:215px;height:22.0px;background:#434343;border-top:1px solid #4c4c4c"></div><div class="a" style="left:1044px;top:188.5px;font-size:9.5px;line-height:11px;color:#d8d8d8">h:</div><div class="a" style="left:1034.3px;top:205.6px;width:215px;height:21.599999999999994px;background:#333333;border-top:1px solid #4c4c4c"></div><div class="a" style="left:1044px;top:210.29999999999998px;font-size:9.5px;line-height:11px;color:#d8d8d8">enable:</div><div class="a" style="left:1034.3px;top:227.2px;width:215px;height:22.200000000000017px;background:#434343;border-top:1px solid #4c4c4c"></div><div class="a" style="left:1044px;top:232.20000000000002px;font-size:9.5px;line-height:11px;color:#d8d8d8">visible:</div><div class="a" style="left:1034.3px;top:249.4px;width:215px;height:21.200000000000017px;background:#333333;border-top:1px solid #4c4c4c"></div><div class="a" style="left:1044px;top:253.9px;font-size:9.5px;line-height:11px;color:#d8d8d8">state:</div><div class="a" style="left:1034.3px;top:270.6px;width:215px;height:21.69999999999999px;background:#434343;border-top:1px solid #4c4c4c"></div><div class="a" style="left:1044px;top:275.35px;font-size:9.5px;line-height:11px;color:#d8d8d8">border_color:</div><div class="a" style="left:1034.3px;top:292.3px;width:215px;height:21.5px;background:#333333;border-top:1px solid #4c4c4c"></div><div class="a" style="left:1044px;top:296.95px;font-size:9.5px;line-height:11px;color:#d8d8d8">border:</div><div class="a" style="left:1034.3px;top:313.8px;width:215px;height:21.69999999999999px;background:#434343;border-top:1px solid #4c4c4c"></div><div class="a" style="left:1044px;top:318.54999999999995px;font-size:9.5px;line-height:11px;color:#d8d8d8">border_width:</div><div class="a" style="left:1034.3px;top:335.5px;width:215px;height:21.5px;background:#333333;border-top:1px solid #4c4c4c"></div><svg style="left:1044px;top:344.5px" width="8" height="5"><path d="M1 1 L4 4 L7 1" fill="none" stroke="#ddd" stroke-width="1.2"/></svg><div class="a" style="left:1057.5px;top:340.15px;font-size:9.5px;line-height:11px;color:#d8d8d8">round_radius:</div><div class="a" style="left:1034.3px;top:357.0px;width:215px;height:21.5px;background:#434343;border-top:1px solid #4c4c4c"></div><div class="a" style="left:1044px;top:361.65px;font-size:9.5px;line-height:11px;color:#d8d8d8">bg_color:</div><div class="a" style="left:1034.3px;top:378.5px;width:215px;height:21.5px;background:#333333;border-top:1px solid #4c4c4c"></div><div class="a" style="left:1044px;top:383.15px;font-size:9.5px;line-height:11px;color:#d8d8d8">bg_image:</div><div class="a" style="left:1034.3px;top:400.0px;width:215px;height:21.5px;background:#434343;border-top:1px solid #4c4c4c"></div><div class="a" style="left:1044px;top:404.65px;font-size:9.5px;line-height:11px;color:#d8d8d8">bg_image_draw_type:</div><div class="a" style="left:1034.3px;top:421.5px;width:215px;height:21.399999999999977px;background:#333333;border-top:1px solid #4c4c4c"></div><div class="a" style="left:1044px;top:426.09999999999997px;font-size:9.5px;line-height:11px;color:#d8d8d8">feedback:</div><div class="a" style="left:1034.3px;top:442.9px;width:215px;height:22.30000000000001px;background:#434343;border-top:1px solid #4c4c4c"></div><div class="a" style="left:1044px;top:447.94999999999993px;font-size:9.5px;line-height:11px;color:#d8d8d8">sensitive:</div><div class="a" style="left:1034.3px;top:465.2px;width:215px;height:22.19999999999999px;background:#333333;border-top:1px solid #4c4c4c"></div><div class="a" style="left:1044px;top:470.19999999999993px;font-size:9.5px;line-height:11px;color:#d8d8d8">dirty_rect_tolerance:</div><div class="a" style="left:1034.3px;top:487.4px;width:215px;height:21.80000000000001px;background:#434343;border-top:1px solid #4c4c4c"></div><div class="a" style="left:1044px;top:492.19999999999993px;font-size:9.5px;line-height:11px;color:#d8d8d8">disable_anim_hint:</div><div class="a" style="left:1034.3px;top:509.2px;width:215px;height:21.900000000000034px;background:#333333;border-top:1px solid #4c4c4c"></div><div class="a" style="left:1044px;top:514.05px;font-size:9.5px;line-height:11px;color:#d8d8d8">focusable:</div><div class="a" style="left:1034.3px;top:531.1px;width:215px;height:22.299999999999955px;background:#434343;border-top:1px solid #4c4c4c"></div><div class="a" style="left:1044px;top:536.15px;font-size:9.5px;line-height:11px;color:#d8d8d8">fullscreen:</div><div class="a" style="left:1034.3px;top:553.4px;width:215px;height:22.0px;background:#333333;border-top:1px solid #4c4c4c"></div><div class="a" style="left:1044px;top:558.3px;font-size:9.5px;line-height:11px;color:#d8d8d8">with_focusable_state:</div><div class="a" style="left:1034.3px;top:575.4px;width:215px;height:1px;background:#4c4c4c"></div><div class="a" style="left:1147px;top:76.1px;width:1px;height:499.29999999999995px;background:#4e4e4e"></div><div class="a" style="left:1034px;top:76.1px;width:1px;height:499.29999999999995px;background:#454545"></div><div class="a" style="left:1157.3px;top:80.99999999999999px;width:100px;height:12.8px;background:#212121;border-radius:2.5px;font-size:9.5px;line-height:12.8px;padding-left:2.3px;color:#e0e0e0">home_page</div><div class="a" style="left:1157.3px;top:102.6px;width:100px;height:12.8px;background:#393939;border-radius:2.5px;font-size:9.5px;line-height:12.8px;padding-left:2.3px;color:#666">window</div><div class="a" style="left:1157.3px;top:123.85px;width:100px;height:12.8px;background:#212121;border-radius:2.5px;font-size:9.5px;line-height:12.8px;padding-left:2.3px;color:#e0e0e0">0</div><div class="a" style="left:1157.3px;top:145.20000000000002px;width:100px;height:12.8px;background:#212121;border-radius:2.5px;font-size:9.5px;line-height:12.8px;padding-left:2.3px;color:#e0e0e0">0</div><div class="a" style="left:1157.3px;top:166.79999999999998px;width:100px;height:12.8px;background:#2e2e2e;border-radius:2.5px;font-size:9.5px;line-height:12.8px;padding-left:2.3px;color:#666">800</div><div class="a" style="left:1157.3px;top:188.5px;width:100px;height:12.8px;background:#393939;border-radius:2.5px;font-size:9.5px;line-height:12.8px;padding-left:2.3px;color:#666">480</div><div class="a" style="left:1157.4px;top:211.89999999999998px;width:9px;height:9.6px;background:#d0d0d0;border-radius:2px"></div><svg style="left:1157.4px;top:211.89999999999998px" width="9" height="10"><path d="M2 4.9 L3.9 6.9 L7.2 2.8" fill="none" stroke="#2a2a2a" stroke-width="1.4"/></svg><div class="a" style="left:1157.4px;top:233.8px;width:9px;height:9.6px;background:#d0d0d0;border-radius:2px"></div><svg style="left:1157.4px;top:233.8px" width="9" height="10"><path d="M2 4.9 L3.9 6.9 L7.2 2.8" fill="none" stroke="#2a2a2a" stroke-width="1.4"/></svg><div class="a" style="left:1157.4px;top:253.9px;width:49.4px;height:12.8px;background:#222;font-size:9.5px;line-height:12.8px;padding-left:2.2px;color:#e0e0e0">normal</div><svg style="left:1197px;top:257.8px" width="8" height="5"><path d="M1 1 L3.5 3.5 L6 1" fill="none" stroke="#ddd" stroke-width="1.2"/></svg><div class="a" style="left:1157.3px;top:275.3500000000001px;width:100px;height:12.8px;background:#212121;border-radius:2.5px;font-size:9.5px;line-height:12.8px;padding-left:2.3px;color:#707070">#00000000</div><div class="a" style="left:1157.4px;top:296.75px;width:13.9px;height:13.2px;border:1.3px solid #3b6cc4"></div><svg style="left:1186px;top:296.75px" width="63" height="14"><g fill="none" stroke="#a8a8a8" stroke-width="1.1"><path d="M1 0.6 H14 V12.6 H1"/><path d="M0.6 0.6 V12.6" stroke-dasharray="1.6 1.2"/><path d="M30 12.6 H44 V0.6"/><path d="M30 0.6 V12.6"/><path d="M30 0.6 H44" stroke-dasharray="1.6 1.2"/><path d="M59 0.6 V12.6 H64"/><path d="M59 0.6 H64"/></g></svg><div class="a" style="left:1157.3px;top:318.55px;width:84px;height:12.8px;background:#212121;border-radius:2.5px;font-size:9.5px;line-height:12.8px;padding-left:2.3px;color:#e0e0e0">1</div><svg style="left:1239px;top:318.45px" width="10" height="13"><path d="M2 0 V13" stroke="#555" stroke-width="0.8"/><path d="M3.5 4.5 Q6 1.5 8.5 4.5 M3.5 8.5 Q6 11.5 8.5 8.5" fill="none" stroke="#999" stroke-width="1"/></svg><div class="a" style="left:1157.3px;top:340.15000000000003px;width:84px;height:12.8px;background:#212121;border-radius:2.5px;font-size:9.5px;line-height:12.8px;padding-left:2.3px;color:#e0e0e0">0</div><svg style="left:1239px;top:340.05px" width="10" height="13"><path d="M2 0 V13" stroke="#555" stroke-width="0.8"/><path d="M3.5 4.5 Q6 1.5 8.5 4.5 M3.5 8.5 Q6 11.5 8.5 8.5" fill="none" stroke="#999" stroke-width="1"/></svg><div class="a" style="left:1157.3px;top:361.65000000000003px;width:100px;height:12.8px;background:#212121;border-radius:2.5px;font-size:9.5px;line-height:12.8px;padding-left:2.3px;color:#e0e0e0">#FFFFFF</div><div class="a" style="left:1157.3px;top:383.15000000000003px;width:86px;height:12.8px;background:#212121;border-radius:2.5px;font-size:9.5px;line-height:12.8px;padding-left:2.3px;color:#e0e0e0">1_button</div><div class="a" style="left:1244px;top:382.75px;width:8px;height:13.6px;background:#222;border:1px solid #555;border-radius:2px"></div><svg style="left:1246px;top:387.55px" width="5" height="5"><path d="M0.5 1 L3 3.5" fill="none" stroke="#ddd" stroke-width="1.1"/></svg><div class="a" style="left:1157.3px;top:404.65000000000003px;width:85.2px;height:12.8px;background:#212121;border-radius:2px"></div><svg style="left:1159.5px;top:406.05px" width="72" height="10"><g fill="none" stroke="#6e6e6e" stroke-width="0.8" transform="skewX(-12)"><path d="M2 2 H5 M3 2 V8 L10 8.5 M6 1 H10 M6 3.5 H10 M6 6 H10 M8 1 V7"/><path d="M11.5 2 H14.5 M12.5 2 V8 L19.5 8.5 M15.5 1 H19.5 M15.5 3.5 H19.5 M15.5 6 H19.5 M17.5 1 V7"/><path d="M21 5 H29"/><path d="M34.5 1 L30.5 5 M34.5 1 L38.5 5 M34.5 3.5 V9"/><path d="M40 2 H43 M41 2 V8 L48 8.5 M44 1 H48 M44 3.5 H48 M44 6 H48 M46 1 V7"/><path d="M49.5 2 H52.5 M50.5 2 V8 L57.5 8.5 M53.5 1 H57.5 M53.5 3.5 H57.5 M53.5 6 H57.5 M55.5 1 V7"/></g><g fill="#6e6e6e"><circle cx="62" cy="8" r="0.6"/><circle cx="64.5" cy="8" r="0.6"/></g></svg><svg style="left:1232px;top:408.55px" width="8" height="5"><path d="M1 1 L3.8 3.8 L6.6 1" fill="none" stroke="#ddd" stroke-width="1.2"/></svg><div class="a" style="left:1157.3px;top:427.8px;width:9px;height:9.4px;background:#1f1f1f;border:1.2px solid #9a9a9a;border-radius:2px"></div><div class="a" style="left:1157.4px;top:449.54999999999995px;width:9px;height:9.6px;background:#d0d0d0;border-radius:2px"></div><svg style="left:1157.4px;top:449.54999999999995px" width="9" height="10"><path d="M2 4.9 L3.9 6.9 L7.2 2.8" fill="none" stroke="#2a2a2a" stroke-width="1.4"/></svg><div class="a" style="left:1157.3px;top:470.2px;width:84px;height:12.8px;background:#212121;border-radius:2.5px;font-size:9.5px;line-height:12.8px;padding-left:2.3px;color:#e0e0e0">4</div><svg style="left:1239px;top:470.09999999999997px" width="10" height="13"><path d="M2 0 V13" stroke="#555" stroke-width="0.8"/><path d="M3.5 4.5 Q6 1.5 8.5 4.5 M3.5 8.5 Q6 11.5 8.5 8.5" fill="none" stroke="#999" stroke-width="1"/></svg><div class="a" style="left:1157.3px;top:493.9px;width:9px;height:9.4px;background:#1f1f1f;border:1.2px solid #9a9a9a;border-radius:2px"></div><div class="a" style="left:1157.3px;top:515.7499999999999px;width:9px;height:9.4px;background:#1f1f1f;border:1.2px solid #9a9a9a;border-radius:2px"></div><div class="a" style="left:1157.3px;top:537.8499999999999px;width:9px;height:9.4px;background:#1f1f1f;border:1.2px solid #9a9a9a;border-radius:2px"></div><div class="a" style="left:1157.3px;top:559.9999999999999px;width:9px;height:9.4px;background:#1f1f1f;border:1.2px solid #9a9a9a;border-radius:2px"></div><div class="a" style="left:1200.3px;top:601px;width:44.7px;height:22px;background:#fff"></div><svg style="left:1200px;top:601px" width="46" height="22"><path d="M5.5 2 V22" stroke="#999" stroke-width="0.8" stroke-dasharray="1 2.5"/><path d="M34.3 8.3 H38.7" stroke="#111" stroke-width="1.3"/><path d="M34.3 13.7 H38.7 L36.5 16.5Z" fill="#111"/></svg><div class="a" style="left:1211.5px;top:602.8px;font-family:'Liberation Serif',serif;font-size:11px;line-height:14px;color:#111;transform:scale(0.83,1.2);transform-origin:0 0;font-weight:bold">EN</div><div class="a" style="left:0;top:612.8px;width:1200px;height:10.2px;background:#525252"></div><div class="a" style="left:1245px;top:612.8px;width:4px;height:10.2px;background:#525252"></div><div class="a" style="left:0;top:622px;width:1249px;height:1px;background:#263236"></div><div class="a" style="left:47px;top:622px;width:336px;height:1px;background:#c4c4c4"></div><div class="a" style="left:918.6px;top:622px;width:47.4px;height:1px;background:#4c5358"></div></body></html>
